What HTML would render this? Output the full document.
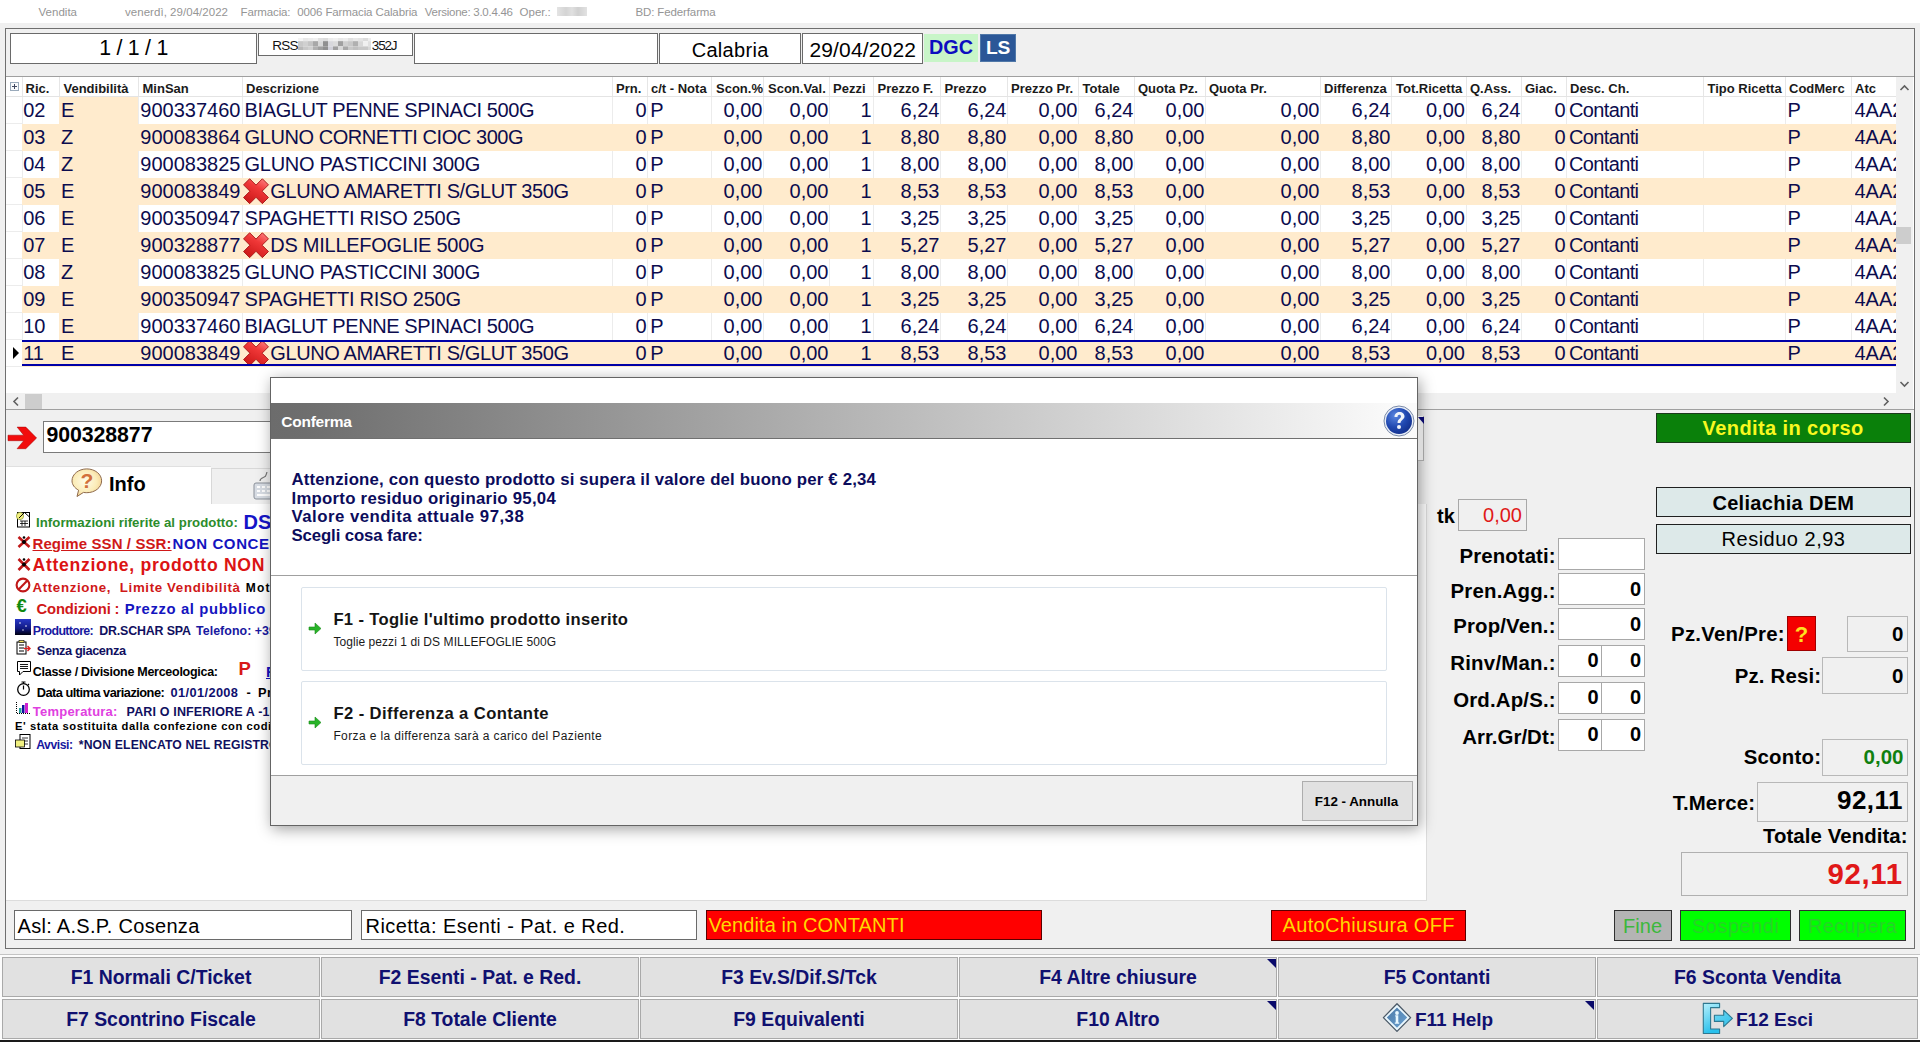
<!DOCTYPE html>
<html><head><meta charset="utf-8"><title>Vendita</title>
<style>
html,body{margin:0;padding:0;}
body{width:1920px;height:1042px;overflow:hidden;position:relative;background:#f0f0f0;font-family:'Liberation Sans', sans-serif;}
div{box-sizing:border-box;}
</style></head><body>
<div style="position:absolute;left:0px;top:0px;width:1920px;height:23px;background:#fff;"></div><div style="position:absolute;left:38.5px;top:6.72px;font-family:'Liberation Sans', sans-serif;font-size:11.5px;line-height:11.5px;font-weight:400;color:#959595;white-space:nowrap;letter-spacing:0.022px;">Vendita</div><div style="position:absolute;left:125px;top:6.72px;font-family:'Liberation Sans', sans-serif;font-size:11.5px;line-height:11.5px;font-weight:400;color:#959595;white-space:nowrap;letter-spacing:0.039px;">venerdì, 29/04/2022</div><div style="position:absolute;left:240.5px;top:6.72px;font-family:'Liberation Sans', sans-serif;font-size:11.5px;line-height:11.5px;font-weight:400;color:#959595;white-space:nowrap;letter-spacing:-0.140px;">Farmacia:</div><div style="position:absolute;left:297.2px;top:6.72px;font-family:'Liberation Sans', sans-serif;font-size:11.5px;line-height:11.5px;font-weight:400;color:#959595;white-space:nowrap;letter-spacing:-0.116px;">0006 Farmacia Calabria</div><div style="position:absolute;left:424.8px;top:6.72px;font-family:'Liberation Sans', sans-serif;font-size:11.5px;line-height:11.5px;font-weight:400;color:#959595;white-space:nowrap;letter-spacing:-0.265px;">Versione: 3.0.4.46</div><div style="position:absolute;left:519.6px;top:6.72px;font-family:'Liberation Sans', sans-serif;font-size:11.5px;line-height:11.5px;font-weight:400;color:#959595;white-space:nowrap;letter-spacing:-0.024px;">Oper.:</div><div style="position:absolute;left:557px;top:7px;width:30px;height:9px;background:linear-gradient(90deg,#e4e4e4,#d4d4d4 30%,#e0e0e0 50%,#d0d0d0 70%,#e2e2e2);"></div><div style="position:absolute;left:635.5px;top:6.72px;font-family:'Liberation Sans', sans-serif;font-size:11.5px;line-height:11.5px;font-weight:400;color:#959595;white-space:nowrap;letter-spacing:-0.123px;">BD: Federfarma</div><div style="position:absolute;left:5px;top:28px;width:1910px;height:921px;border:1px solid #6f6f6f;"></div><div style="position:absolute;left:10px;top:33px;width:247px;height:31px;border:1px solid #6a6a6a;background:#fff;"></div><div style="position:absolute;left:99.3px;top:38.02px;font-family:'Liberation Sans', sans-serif;font-size:21.3px;line-height:21.3px;font-weight:400;color:#000;white-space:nowrap;letter-spacing:-0.255px;">1 / 1 / 1</div><div style="position:absolute;left:258px;top:33px;width:155px;height:23px;border:1px solid #6a6a6a;background:#fff;"></div><div style="position:absolute;left:272.2px;top:38.72px;font-family:'Liberation Sans', sans-serif;font-size:13.5px;line-height:13.5px;font-weight:400;color:#111;white-space:nowrap;letter-spacing:-0.780px;">RSS</div><svg style="position:absolute;left:298px;top:38px" width="73" height="12" viewBox="0 0 73 11.5" preserveAspectRatio="none"><rect x="0" y="0" width="5" height="3" fill="#f4f4f4"/><rect x="0" y="3" width="5" height="5" fill="#c8c8c8"/><rect x="0" y="8" width="5" height="3.5" fill="#b8b8b8"/><rect x="5" y="0" width="5" height="3" fill="#e8e8e8"/><rect x="5" y="3" width="5" height="5" fill="#d0d0d0"/><rect x="5" y="8" width="5" height="3.5" fill="#c8c8c8"/><rect x="10" y="0" width="5" height="3" fill="#ececec"/><rect x="10" y="3" width="5" height="5" fill="#c4c4c4"/><rect x="10" y="8" width="5" height="3.5" fill="#d0d0d0"/><rect x="15" y="0" width="5" height="3" fill="#f0f0f0"/><rect x="15" y="3" width="5" height="5" fill="#a8a8a8"/><rect x="15" y="8" width="5" height="3.5" fill="#b0b0b0"/><rect x="20" y="0" width="5" height="3" fill="#e0e0e0"/><rect x="20" y="3" width="5" height="5" fill="#d8d8d8"/><rect x="20" y="8" width="5" height="3.5" fill="#a0a0a0"/><rect x="25" y="0" width="5" height="3" fill="#dcdcdc"/><rect x="25" y="3" width="5" height="5" fill="#909090"/><rect x="25" y="8" width="5" height="3.5" fill="#909090"/><rect x="30" y="0" width="5" height="3" fill="#ececec"/><rect x="30" y="3" width="5" height="5" fill="#d8d8dc"/><rect x="30" y="8" width="5" height="3.5" fill="#d0d0d8"/><rect x="35" y="0" width="5" height="3" fill="#f0f0f0"/><rect x="35" y="3" width="5" height="5" fill="#dcdcdc"/><rect x="35" y="8" width="5" height="3.5" fill="#a0a0a0"/><rect x="40" y="0" width="5" height="3" fill="#e8e8e8"/><rect x="40" y="3" width="5" height="5" fill="#a0a0a0"/><rect x="40" y="8" width="5" height="3.5" fill="#d8d8d8"/><rect x="45" y="0" width="5" height="3" fill="#ececec"/><rect x="45" y="3" width="5" height="5" fill="#d0d0d0"/><rect x="45" y="8" width="5" height="3.5" fill="#a8a8a8"/><rect x="50" y="0" width="5" height="3" fill="#e0e0e0"/><rect x="50" y="3" width="5" height="5" fill="#c8c8c8"/><rect x="50" y="8" width="5" height="3.5" fill="#c8c8c8"/><rect x="55" y="0" width="5" height="3" fill="#e8e8e8"/><rect x="55" y="3" width="5" height="5" fill="#b0b0b0"/><rect x="55" y="8" width="5" height="3.5" fill="#c0c0c0"/><rect x="60" y="0" width="5" height="3" fill="#e4e4e4"/><rect x="60" y="3" width="5" height="5" fill="#d8d8d8"/><rect x="60" y="8" width="5" height="3.5" fill="#c8c8c8"/><rect x="65" y="0" width="5" height="3" fill="#dcdcdc"/><rect x="65" y="3" width="5" height="5" fill="#f0f0f0"/><rect x="65" y="8" width="5" height="3.5" fill="#c8c8c8"/><rect x="70" y="0" width="5" height="3" fill="#eeeeee"/><rect x="70" y="3" width="5" height="5" fill="#e0e0e0"/><rect x="70" y="8" width="5" height="3.5" fill="#d8d8d8"/></svg><div style="position:absolute;left:371.8px;top:38.72px;font-family:'Liberation Sans', sans-serif;font-size:13.5px;line-height:13.5px;font-weight:400;color:#111;white-space:nowrap;letter-spacing:-1.158px;">352J</div><div style="position:absolute;left:414px;top:33px;width:244px;height:31px;border:1px solid #6a6a6a;background:#fff;"></div><div style="position:absolute;left:659px;top:33px;width:142px;height:31px;border:1px solid #6a6a6a;background:#fff;"></div><div style="position:absolute;left:691.7px;top:39.52px;font-family:'Liberation Sans', sans-serif;font-size:20px;line-height:20px;font-weight:400;color:#000;white-space:nowrap;letter-spacing:0.302px;">Calabria</div><div style="position:absolute;left:802px;top:33px;width:121px;height:31px;border:1px solid #6a6a6a;background:#fff;"></div><div style="position:absolute;left:809.4px;top:38.67px;font-family:'Liberation Sans', sans-serif;font-size:21px;line-height:21px;font-weight:400;color:#000;white-space:nowrap;letter-spacing:0.166px;">29/04/2022</div><div style="position:absolute;left:924px;top:34px;width:54px;height:28px;background:#c8f5c8;"></div><div style="position:absolute;left:929px;top:37.99px;font-family:'Liberation Sans', sans-serif;font-size:19.8px;line-height:19.8px;font-weight:700;color:#0d0dc0;white-space:nowrap;letter-spacing:0.000px;">DGC</div><div style="position:absolute;left:980px;top:34px;width:36px;height:28px;background:#2b5797;border:1px solid #5078a8;"></div><div style="position:absolute;left:986px;top:38.00px;font-family:'Liberation Sans', sans-serif;font-size:19.2px;line-height:19.2px;font-weight:700;color:#fff;white-space:nowrap;letter-spacing:-0.136px;">LS</div><div style="position:absolute;left:6px;top:76px;width:1908px;height:334px;background:#fff;"></div><div style="position:absolute;left:6px;top:76px;width:1908px;height:1px;background:#a0a0a0;"></div><div style="position:absolute;left:6px;top:96px;width:1890px;height:1px;background:#e4e4e4;"></div><div style="position:absolute;left:22px;top:77px;width:1px;height:19px;background:#e6e6e6;"></div><div style="position:absolute;left:22px;top:97px;width:1px;height:270px;background:#ececec;"></div><div style="position:absolute;left:59px;top:77px;width:1px;height:19px;background:#e6e6e6;"></div><div style="position:absolute;left:59px;top:97px;width:1px;height:270px;background:#ececec;"></div><div style="position:absolute;left:138px;top:77px;width:1px;height:19px;background:#e6e6e6;"></div><div style="position:absolute;left:138px;top:97px;width:1px;height:270px;background:#ececec;"></div><div style="position:absolute;left:242px;top:77px;width:1px;height:19px;background:#e6e6e6;"></div><div style="position:absolute;left:242px;top:97px;width:1px;height:270px;background:#ececec;"></div><div style="position:absolute;left:612px;top:77px;width:1px;height:19px;background:#e6e6e6;"></div><div style="position:absolute;left:612px;top:97px;width:1px;height:270px;background:#ececec;"></div><div style="position:absolute;left:647px;top:77px;width:1px;height:19px;background:#e6e6e6;"></div><div style="position:absolute;left:647px;top:97px;width:1px;height:270px;background:#ececec;"></div><div style="position:absolute;left:711px;top:77px;width:1px;height:19px;background:#e6e6e6;"></div><div style="position:absolute;left:711px;top:97px;width:1px;height:270px;background:#ececec;"></div><div style="position:absolute;left:763px;top:77px;width:1px;height:19px;background:#e6e6e6;"></div><div style="position:absolute;left:763px;top:97px;width:1px;height:270px;background:#ececec;"></div><div style="position:absolute;left:829px;top:77px;width:1px;height:19px;background:#e6e6e6;"></div><div style="position:absolute;left:829px;top:97px;width:1px;height:270px;background:#ececec;"></div><div style="position:absolute;left:873px;top:77px;width:1px;height:19px;background:#e6e6e6;"></div><div style="position:absolute;left:873px;top:97px;width:1px;height:270px;background:#ececec;"></div><div style="position:absolute;left:940px;top:77px;width:1px;height:19px;background:#e6e6e6;"></div><div style="position:absolute;left:940px;top:97px;width:1px;height:270px;background:#ececec;"></div><div style="position:absolute;left:1007px;top:77px;width:1px;height:19px;background:#e6e6e6;"></div><div style="position:absolute;left:1007px;top:97px;width:1px;height:270px;background:#ececec;"></div><div style="position:absolute;left:1078px;top:77px;width:1px;height:19px;background:#e6e6e6;"></div><div style="position:absolute;left:1078px;top:97px;width:1px;height:270px;background:#ececec;"></div><div style="position:absolute;left:1134px;top:77px;width:1px;height:19px;background:#e6e6e6;"></div><div style="position:absolute;left:1134px;top:97px;width:1px;height:270px;background:#ececec;"></div><div style="position:absolute;left:1205px;top:77px;width:1px;height:19px;background:#e6e6e6;"></div><div style="position:absolute;left:1205px;top:97px;width:1px;height:270px;background:#ececec;"></div><div style="position:absolute;left:1320px;top:77px;width:1px;height:19px;background:#e6e6e6;"></div><div style="position:absolute;left:1320px;top:97px;width:1px;height:270px;background:#ececec;"></div><div style="position:absolute;left:1391px;top:77px;width:1px;height:19px;background:#e6e6e6;"></div><div style="position:absolute;left:1391px;top:97px;width:1px;height:270px;background:#ececec;"></div><div style="position:absolute;left:1466px;top:77px;width:1px;height:19px;background:#e6e6e6;"></div><div style="position:absolute;left:1466px;top:97px;width:1px;height:270px;background:#ececec;"></div><div style="position:absolute;left:1521px;top:77px;width:1px;height:19px;background:#e6e6e6;"></div><div style="position:absolute;left:1521px;top:97px;width:1px;height:270px;background:#ececec;"></div><div style="position:absolute;left:1566px;top:77px;width:1px;height:19px;background:#e6e6e6;"></div><div style="position:absolute;left:1566px;top:97px;width:1px;height:270px;background:#ececec;"></div><div style="position:absolute;left:1703px;top:77px;width:1px;height:19px;background:#e6e6e6;"></div><div style="position:absolute;left:1703px;top:97px;width:1px;height:270px;background:#ececec;"></div><div style="position:absolute;left:1785px;top:77px;width:1px;height:19px;background:#e6e6e6;"></div><div style="position:absolute;left:1785px;top:97px;width:1px;height:270px;background:#ececec;"></div><div style="position:absolute;left:1851px;top:77px;width:1px;height:19px;background:#e6e6e6;"></div><div style="position:absolute;left:1851px;top:97px;width:1px;height:270px;background:#ececec;"></div><div style="position:absolute;left:59px;top:97px;width:79px;height:27px;background:#ffebcd;"></div><div style="position:absolute;left:6px;top:123px;width:16px;height:1px;background:#ececec;"></div><div style="position:absolute;left:22px;top:124px;width:1874px;height:27px;background:#ffebcd;"></div><div style="position:absolute;left:6px;top:150px;width:16px;height:1px;background:#ececec;"></div><div style="position:absolute;left:59px;top:151px;width:79px;height:27px;background:#ffebcd;"></div><div style="position:absolute;left:6px;top:177px;width:16px;height:1px;background:#ececec;"></div><div style="position:absolute;left:22px;top:178px;width:1874px;height:27px;background:#ffebcd;"></div><div style="position:absolute;left:6px;top:204px;width:16px;height:1px;background:#ececec;"></div><div style="position:absolute;left:59px;top:205px;width:79px;height:27px;background:#ffebcd;"></div><div style="position:absolute;left:6px;top:231px;width:16px;height:1px;background:#ececec;"></div><div style="position:absolute;left:22px;top:232px;width:1874px;height:27px;background:#ffebcd;"></div><div style="position:absolute;left:6px;top:258px;width:16px;height:1px;background:#ececec;"></div><div style="position:absolute;left:59px;top:259px;width:79px;height:27px;background:#ffebcd;"></div><div style="position:absolute;left:6px;top:285px;width:16px;height:1px;background:#ececec;"></div><div style="position:absolute;left:22px;top:286px;width:1874px;height:27px;background:#ffebcd;"></div><div style="position:absolute;left:6px;top:312px;width:16px;height:1px;background:#ececec;"></div><div style="position:absolute;left:59px;top:313px;width:79px;height:27px;background:#ffebcd;"></div><div style="position:absolute;left:6px;top:339px;width:16px;height:1px;background:#ececec;"></div><div style="position:absolute;left:22px;top:340px;width:1874px;height:27px;background:#ffebcd;"></div><div style="position:absolute;left:6px;top:366px;width:16px;height:1px;background:#ececec;"></div><div style="position:absolute;left:25.5px;top:82.45px;font-family:'Liberation Sans', sans-serif;font-size:13px;line-height:13px;font-weight:700;color:#1a1a1a;white-space:nowrap;">Ric.</div><div style="position:absolute;left:63.5px;top:82.45px;font-family:'Liberation Sans', sans-serif;font-size:13px;line-height:13px;font-weight:700;color:#1a1a1a;white-space:nowrap;">Vendibilità</div><div style="position:absolute;left:142.5px;top:82.45px;font-family:'Liberation Sans', sans-serif;font-size:13px;line-height:13px;font-weight:700;color:#1a1a1a;white-space:nowrap;">MinSan</div><div style="position:absolute;left:246px;top:82.45px;font-family:'Liberation Sans', sans-serif;font-size:13px;line-height:13px;font-weight:700;color:#1a1a1a;white-space:nowrap;">Descrizione</div><div style="position:absolute;left:616px;top:82.45px;font-family:'Liberation Sans', sans-serif;font-size:13px;line-height:13px;font-weight:700;color:#1a1a1a;white-space:nowrap;">Prn.</div><div style="position:absolute;left:651px;top:82.45px;font-family:'Liberation Sans', sans-serif;font-size:13px;line-height:13px;font-weight:700;color:#1a1a1a;white-space:nowrap;">c/t - Nota</div><div style="position:absolute;left:716px;top:82.45px;font-family:'Liberation Sans', sans-serif;font-size:13px;line-height:13px;font-weight:700;color:#1a1a1a;white-space:nowrap;">Scon.%</div><div style="position:absolute;left:768px;top:82.45px;font-family:'Liberation Sans', sans-serif;font-size:13px;line-height:13px;font-weight:700;color:#1a1a1a;white-space:nowrap;">Scon.Val.</div><div style="position:absolute;left:833px;top:82.45px;font-family:'Liberation Sans', sans-serif;font-size:13px;line-height:13px;font-weight:700;color:#1a1a1a;white-space:nowrap;">Pezzi</div><div style="position:absolute;left:877.5px;top:82.45px;font-family:'Liberation Sans', sans-serif;font-size:13px;line-height:13px;font-weight:700;color:#1a1a1a;white-space:nowrap;">Prezzo F.</div><div style="position:absolute;left:944.5px;top:82.45px;font-family:'Liberation Sans', sans-serif;font-size:13px;line-height:13px;font-weight:700;color:#1a1a1a;white-space:nowrap;">Prezzo</div><div style="position:absolute;left:1011px;top:82.45px;font-family:'Liberation Sans', sans-serif;font-size:13px;line-height:13px;font-weight:700;color:#1a1a1a;white-space:nowrap;">Prezzo Pr.</div><div style="position:absolute;left:1082.5px;top:82.45px;font-family:'Liberation Sans', sans-serif;font-size:13px;line-height:13px;font-weight:700;color:#1a1a1a;white-space:nowrap;">Totale</div><div style="position:absolute;left:1138px;top:82.45px;font-family:'Liberation Sans', sans-serif;font-size:13px;line-height:13px;font-weight:700;color:#1a1a1a;white-space:nowrap;">Quota Pz.</div><div style="position:absolute;left:1209px;top:82.45px;font-family:'Liberation Sans', sans-serif;font-size:13px;line-height:13px;font-weight:700;color:#1a1a1a;white-space:nowrap;">Quota Pr.</div><div style="position:absolute;left:1324px;top:82.45px;font-family:'Liberation Sans', sans-serif;font-size:13px;line-height:13px;font-weight:700;color:#1a1a1a;white-space:nowrap;">Differenza</div><div style="position:absolute;left:1396px;top:82.45px;font-family:'Liberation Sans', sans-serif;font-size:13px;line-height:13px;font-weight:700;color:#1a1a1a;white-space:nowrap;">Tot.Ricetta</div><div style="position:absolute;left:1470px;top:82.45px;font-family:'Liberation Sans', sans-serif;font-size:13px;line-height:13px;font-weight:700;color:#1a1a1a;white-space:nowrap;">Q.Ass.</div><div style="position:absolute;left:1525px;top:82.45px;font-family:'Liberation Sans', sans-serif;font-size:13px;line-height:13px;font-weight:700;color:#1a1a1a;white-space:nowrap;">Giac.</div><div style="position:absolute;left:1570px;top:82.45px;font-family:'Liberation Sans', sans-serif;font-size:13px;line-height:13px;font-weight:700;color:#1a1a1a;white-space:nowrap;">Desc. Ch.</div><div style="position:absolute;left:1707.5px;top:82.45px;font-family:'Liberation Sans', sans-serif;font-size:13px;line-height:13px;font-weight:700;color:#1a1a1a;white-space:nowrap;">Tipo Ricetta</div><div style="position:absolute;left:1789px;top:82.45px;font-family:'Liberation Sans', sans-serif;font-size:13px;line-height:13px;font-weight:700;color:#1a1a1a;white-space:nowrap;">CodMerc</div><div style="position:absolute;left:1855px;top:82.45px;font-family:'Liberation Sans', sans-serif;font-size:13px;line-height:13px;font-weight:700;color:#1a1a1a;white-space:nowrap;">Atc</div><div style="position:absolute;left:10px;top:82px;width:9px;height:9px;border:1px solid #9aaabb;background:#f8fafc;"></div><div style="position:absolute;left:12px;top:86px;width:5px;height:1px;background:#404860;"></div><div style="position:absolute;left:14px;top:84px;width:1px;height:5px;background:#404860;"></div><div style="position:absolute;left:23.2px;top:100.07px;font-family:'Liberation Sans', sans-serif;font-size:20px;line-height:20px;font-weight:400;color:#0c0c4e;white-space:nowrap;">02</div><div style="position:absolute;left:61px;top:100.07px;font-family:'Liberation Sans', sans-serif;font-size:20px;line-height:20px;font-weight:400;color:#0c0c4e;white-space:nowrap;">E</div><div style="position:absolute;left:140.3px;top:100.07px;font-family:'Liberation Sans', sans-serif;font-size:20px;line-height:20px;font-weight:400;color:#0c0c4e;white-space:nowrap;">900337460</div><div style="position:absolute;left:244.6px;top:100.07px;font-family:'Liberation Sans', sans-serif;font-size:20px;line-height:20px;font-weight:400;color:#0c0c4e;white-space:nowrap;letter-spacing:-0.390px;">BIAGLUT PENNE SPINACI 500G</div><div style="position:absolute;right:1273.500px;top:100.07px;font-family:'Liberation Sans', sans-serif;font-size:20px;line-height:20px;font-weight:400;color:#0c0c4e;white-space:nowrap;">0</div><div style="position:absolute;left:650.3px;top:100.07px;font-family:'Liberation Sans', sans-serif;font-size:20px;line-height:20px;font-weight:400;color:#0c0c4e;white-space:nowrap;">P</div><div style="position:absolute;right:1157.500px;top:100.07px;font-family:'Liberation Sans', sans-serif;font-size:20px;line-height:20px;font-weight:400;color:#0c0c4e;white-space:nowrap;">0,00</div><div style="position:absolute;right:1091.500px;top:100.07px;font-family:'Liberation Sans', sans-serif;font-size:20px;line-height:20px;font-weight:400;color:#0c0c4e;white-space:nowrap;">0,00</div><div style="position:absolute;right:1048.500px;top:100.07px;font-family:'Liberation Sans', sans-serif;font-size:20px;line-height:20px;font-weight:400;color:#0c0c4e;white-space:nowrap;">1</div><div style="position:absolute;right:980.500px;top:100.07px;font-family:'Liberation Sans', sans-serif;font-size:20px;line-height:20px;font-weight:400;color:#0c0c4e;white-space:nowrap;">6,24</div><div style="position:absolute;right:913.500px;top:100.07px;font-family:'Liberation Sans', sans-serif;font-size:20px;line-height:20px;font-weight:400;color:#0c0c4e;white-space:nowrap;">6,24</div><div style="position:absolute;right:842.500px;top:100.07px;font-family:'Liberation Sans', sans-serif;font-size:20px;line-height:20px;font-weight:400;color:#0c0c4e;white-space:nowrap;">0,00</div><div style="position:absolute;right:786.500px;top:100.07px;font-family:'Liberation Sans', sans-serif;font-size:20px;line-height:20px;font-weight:400;color:#0c0c4e;white-space:nowrap;">6,24</div><div style="position:absolute;right:715.500px;top:100.07px;font-family:'Liberation Sans', sans-serif;font-size:20px;line-height:20px;font-weight:400;color:#0c0c4e;white-space:nowrap;">0,00</div><div style="position:absolute;right:600.500px;top:100.07px;font-family:'Liberation Sans', sans-serif;font-size:20px;line-height:20px;font-weight:400;color:#0c0c4e;white-space:nowrap;">0,00</div><div style="position:absolute;right:529.500px;top:100.07px;font-family:'Liberation Sans', sans-serif;font-size:20px;line-height:20px;font-weight:400;color:#0c0c4e;white-space:nowrap;">6,24</div><div style="position:absolute;right:455.000px;top:100.07px;font-family:'Liberation Sans', sans-serif;font-size:20px;line-height:20px;font-weight:400;color:#0c0c4e;white-space:nowrap;">0,00</div><div style="position:absolute;right:399.500px;top:100.07px;font-family:'Liberation Sans', sans-serif;font-size:20px;line-height:20px;font-weight:400;color:#0c0c4e;white-space:nowrap;">6,24</div><div style="position:absolute;right:354.500px;top:100.07px;font-family:'Liberation Sans', sans-serif;font-size:20px;line-height:20px;font-weight:400;color:#0c0c4e;white-space:nowrap;">0</div><div style="position:absolute;left:1569px;top:100.07px;font-family:'Liberation Sans', sans-serif;font-size:20px;line-height:20px;font-weight:400;color:#0c0c4e;white-space:nowrap;letter-spacing:-0.642px;">Contanti</div><div style="position:absolute;left:1787.5px;top:100.07px;font-family:'Liberation Sans', sans-serif;font-size:20px;line-height:20px;font-weight:400;color:#0c0c4e;white-space:nowrap;">P</div><div style="position:absolute;left:1854.5px;top:100.07px;font-family:'Liberation Sans', sans-serif;font-size:20px;line-height:20px;font-weight:400;color:#0c0c4e;white-space:nowrap;width:41px;overflow:hidden;">4AA2</div><div style="position:absolute;left:23.2px;top:127.07px;font-family:'Liberation Sans', sans-serif;font-size:20px;line-height:20px;font-weight:400;color:#0c0c4e;white-space:nowrap;">03</div><div style="position:absolute;left:61px;top:127.07px;font-family:'Liberation Sans', sans-serif;font-size:20px;line-height:20px;font-weight:400;color:#0c0c4e;white-space:nowrap;">Z</div><div style="position:absolute;left:140.3px;top:127.07px;font-family:'Liberation Sans', sans-serif;font-size:20px;line-height:20px;font-weight:400;color:#0c0c4e;white-space:nowrap;">900083864</div><div style="position:absolute;left:244.6px;top:127.07px;font-family:'Liberation Sans', sans-serif;font-size:20px;line-height:20px;font-weight:400;color:#0c0c4e;white-space:nowrap;letter-spacing:-0.432px;">GLUNO CORNETTI CIOC 300G</div><div style="position:absolute;right:1273.500px;top:127.07px;font-family:'Liberation Sans', sans-serif;font-size:20px;line-height:20px;font-weight:400;color:#0c0c4e;white-space:nowrap;">0</div><div style="position:absolute;left:650.3px;top:127.07px;font-family:'Liberation Sans', sans-serif;font-size:20px;line-height:20px;font-weight:400;color:#0c0c4e;white-space:nowrap;">P</div><div style="position:absolute;right:1157.500px;top:127.07px;font-family:'Liberation Sans', sans-serif;font-size:20px;line-height:20px;font-weight:400;color:#0c0c4e;white-space:nowrap;">0,00</div><div style="position:absolute;right:1091.500px;top:127.07px;font-family:'Liberation Sans', sans-serif;font-size:20px;line-height:20px;font-weight:400;color:#0c0c4e;white-space:nowrap;">0,00</div><div style="position:absolute;right:1048.500px;top:127.07px;font-family:'Liberation Sans', sans-serif;font-size:20px;line-height:20px;font-weight:400;color:#0c0c4e;white-space:nowrap;">1</div><div style="position:absolute;right:980.500px;top:127.07px;font-family:'Liberation Sans', sans-serif;font-size:20px;line-height:20px;font-weight:400;color:#0c0c4e;white-space:nowrap;">8,80</div><div style="position:absolute;right:913.500px;top:127.07px;font-family:'Liberation Sans', sans-serif;font-size:20px;line-height:20px;font-weight:400;color:#0c0c4e;white-space:nowrap;">8,80</div><div style="position:absolute;right:842.500px;top:127.07px;font-family:'Liberation Sans', sans-serif;font-size:20px;line-height:20px;font-weight:400;color:#0c0c4e;white-space:nowrap;">0,00</div><div style="position:absolute;right:786.500px;top:127.07px;font-family:'Liberation Sans', sans-serif;font-size:20px;line-height:20px;font-weight:400;color:#0c0c4e;white-space:nowrap;">8,80</div><div style="position:absolute;right:715.500px;top:127.07px;font-family:'Liberation Sans', sans-serif;font-size:20px;line-height:20px;font-weight:400;color:#0c0c4e;white-space:nowrap;">0,00</div><div style="position:absolute;right:600.500px;top:127.07px;font-family:'Liberation Sans', sans-serif;font-size:20px;line-height:20px;font-weight:400;color:#0c0c4e;white-space:nowrap;">0,00</div><div style="position:absolute;right:529.500px;top:127.07px;font-family:'Liberation Sans', sans-serif;font-size:20px;line-height:20px;font-weight:400;color:#0c0c4e;white-space:nowrap;">8,80</div><div style="position:absolute;right:455.000px;top:127.07px;font-family:'Liberation Sans', sans-serif;font-size:20px;line-height:20px;font-weight:400;color:#0c0c4e;white-space:nowrap;">0,00</div><div style="position:absolute;right:399.500px;top:127.07px;font-family:'Liberation Sans', sans-serif;font-size:20px;line-height:20px;font-weight:400;color:#0c0c4e;white-space:nowrap;">8,80</div><div style="position:absolute;right:354.500px;top:127.07px;font-family:'Liberation Sans', sans-serif;font-size:20px;line-height:20px;font-weight:400;color:#0c0c4e;white-space:nowrap;">0</div><div style="position:absolute;left:1569px;top:127.07px;font-family:'Liberation Sans', sans-serif;font-size:20px;line-height:20px;font-weight:400;color:#0c0c4e;white-space:nowrap;letter-spacing:-0.642px;">Contanti</div><div style="position:absolute;left:1787.5px;top:127.07px;font-family:'Liberation Sans', sans-serif;font-size:20px;line-height:20px;font-weight:400;color:#0c0c4e;white-space:nowrap;">P</div><div style="position:absolute;left:1854.5px;top:127.07px;font-family:'Liberation Sans', sans-serif;font-size:20px;line-height:20px;font-weight:400;color:#0c0c4e;white-space:nowrap;width:41px;overflow:hidden;">4AA2</div><div style="position:absolute;left:23.2px;top:154.07px;font-family:'Liberation Sans', sans-serif;font-size:20px;line-height:20px;font-weight:400;color:#0c0c4e;white-space:nowrap;">04</div><div style="position:absolute;left:61px;top:154.07px;font-family:'Liberation Sans', sans-serif;font-size:20px;line-height:20px;font-weight:400;color:#0c0c4e;white-space:nowrap;">Z</div><div style="position:absolute;left:140.3px;top:154.07px;font-family:'Liberation Sans', sans-serif;font-size:20px;line-height:20px;font-weight:400;color:#0c0c4e;white-space:nowrap;">900083825</div><div style="position:absolute;left:244.6px;top:154.07px;font-family:'Liberation Sans', sans-serif;font-size:20px;line-height:20px;font-weight:400;color:#0c0c4e;white-space:nowrap;letter-spacing:-0.316px;">GLUNO PASTICCINI 300G</div><div style="position:absolute;right:1273.500px;top:154.07px;font-family:'Liberation Sans', sans-serif;font-size:20px;line-height:20px;font-weight:400;color:#0c0c4e;white-space:nowrap;">0</div><div style="position:absolute;left:650.3px;top:154.07px;font-family:'Liberation Sans', sans-serif;font-size:20px;line-height:20px;font-weight:400;color:#0c0c4e;white-space:nowrap;">P</div><div style="position:absolute;right:1157.500px;top:154.07px;font-family:'Liberation Sans', sans-serif;font-size:20px;line-height:20px;font-weight:400;color:#0c0c4e;white-space:nowrap;">0,00</div><div style="position:absolute;right:1091.500px;top:154.07px;font-family:'Liberation Sans', sans-serif;font-size:20px;line-height:20px;font-weight:400;color:#0c0c4e;white-space:nowrap;">0,00</div><div style="position:absolute;right:1048.500px;top:154.07px;font-family:'Liberation Sans', sans-serif;font-size:20px;line-height:20px;font-weight:400;color:#0c0c4e;white-space:nowrap;">1</div><div style="position:absolute;right:980.500px;top:154.07px;font-family:'Liberation Sans', sans-serif;font-size:20px;line-height:20px;font-weight:400;color:#0c0c4e;white-space:nowrap;">8,00</div><div style="position:absolute;right:913.500px;top:154.07px;font-family:'Liberation Sans', sans-serif;font-size:20px;line-height:20px;font-weight:400;color:#0c0c4e;white-space:nowrap;">8,00</div><div style="position:absolute;right:842.500px;top:154.07px;font-family:'Liberation Sans', sans-serif;font-size:20px;line-height:20px;font-weight:400;color:#0c0c4e;white-space:nowrap;">0,00</div><div style="position:absolute;right:786.500px;top:154.07px;font-family:'Liberation Sans', sans-serif;font-size:20px;line-height:20px;font-weight:400;color:#0c0c4e;white-space:nowrap;">8,00</div><div style="position:absolute;right:715.500px;top:154.07px;font-family:'Liberation Sans', sans-serif;font-size:20px;line-height:20px;font-weight:400;color:#0c0c4e;white-space:nowrap;">0,00</div><div style="position:absolute;right:600.500px;top:154.07px;font-family:'Liberation Sans', sans-serif;font-size:20px;line-height:20px;font-weight:400;color:#0c0c4e;white-space:nowrap;">0,00</div><div style="position:absolute;right:529.500px;top:154.07px;font-family:'Liberation Sans', sans-serif;font-size:20px;line-height:20px;font-weight:400;color:#0c0c4e;white-space:nowrap;">8,00</div><div style="position:absolute;right:455.000px;top:154.07px;font-family:'Liberation Sans', sans-serif;font-size:20px;line-height:20px;font-weight:400;color:#0c0c4e;white-space:nowrap;">0,00</div><div style="position:absolute;right:399.500px;top:154.07px;font-family:'Liberation Sans', sans-serif;font-size:20px;line-height:20px;font-weight:400;color:#0c0c4e;white-space:nowrap;">8,00</div><div style="position:absolute;right:354.500px;top:154.07px;font-family:'Liberation Sans', sans-serif;font-size:20px;line-height:20px;font-weight:400;color:#0c0c4e;white-space:nowrap;">0</div><div style="position:absolute;left:1569px;top:154.07px;font-family:'Liberation Sans', sans-serif;font-size:20px;line-height:20px;font-weight:400;color:#0c0c4e;white-space:nowrap;letter-spacing:-0.642px;">Contanti</div><div style="position:absolute;left:1787.5px;top:154.07px;font-family:'Liberation Sans', sans-serif;font-size:20px;line-height:20px;font-weight:400;color:#0c0c4e;white-space:nowrap;">P</div><div style="position:absolute;left:1854.5px;top:154.07px;font-family:'Liberation Sans', sans-serif;font-size:20px;line-height:20px;font-weight:400;color:#0c0c4e;white-space:nowrap;width:41px;overflow:hidden;">4AA2</div><div style="position:absolute;left:23.2px;top:181.07px;font-family:'Liberation Sans', sans-serif;font-size:20px;line-height:20px;font-weight:400;color:#0c0c4e;white-space:nowrap;">05</div><div style="position:absolute;left:61px;top:181.07px;font-family:'Liberation Sans', sans-serif;font-size:20px;line-height:20px;font-weight:400;color:#0c0c4e;white-space:nowrap;">E</div><div style="position:absolute;left:140.3px;top:181.07px;font-family:'Liberation Sans', sans-serif;font-size:20px;line-height:20px;font-weight:400;color:#0c0c4e;white-space:nowrap;">900083849</div><svg style="position:absolute;left:243px;top:178px" width="27" height="27" viewBox="0 0 27 27"><defs><linearGradient id="xg" x1="0" y1="0" x2="0.3" y2="1"><stop offset="0" stop-color="#ff8a8a"/><stop offset="0.45" stop-color="#f03838"/><stop offset="1" stop-color="#d01c1c"/></linearGradient></defs><g transform="translate(13,13.2) rotate(45)"><path d="M13.30,4.30 L4.30,4.30 L4.30,13.30 L-4.30,13.30 L-4.30,4.30 L-13.30,4.30 L-13.30,-4.30 L-4.30,-4.30 L-4.30,-13.30 L4.30,-13.30 L4.30,-4.30 L13.30,-4.30 Z" fill="url(#xg)" stroke="#a81818" stroke-width="0.9" stroke-linejoin="round"/></g></svg><div style="position:absolute;left:270.3px;top:181.07px;font-family:'Liberation Sans', sans-serif;font-size:20px;line-height:20px;font-weight:400;color:#0c0c4e;white-space:nowrap;letter-spacing:-0.392px;">GLUNO AMARETTI S/GLUT 350G</div><div style="position:absolute;right:1273.500px;top:181.07px;font-family:'Liberation Sans', sans-serif;font-size:20px;line-height:20px;font-weight:400;color:#0c0c4e;white-space:nowrap;">0</div><div style="position:absolute;left:650.3px;top:181.07px;font-family:'Liberation Sans', sans-serif;font-size:20px;line-height:20px;font-weight:400;color:#0c0c4e;white-space:nowrap;">P</div><div style="position:absolute;right:1157.500px;top:181.07px;font-family:'Liberation Sans', sans-serif;font-size:20px;line-height:20px;font-weight:400;color:#0c0c4e;white-space:nowrap;">0,00</div><div style="position:absolute;right:1091.500px;top:181.07px;font-family:'Liberation Sans', sans-serif;font-size:20px;line-height:20px;font-weight:400;color:#0c0c4e;white-space:nowrap;">0,00</div><div style="position:absolute;right:1048.500px;top:181.07px;font-family:'Liberation Sans', sans-serif;font-size:20px;line-height:20px;font-weight:400;color:#0c0c4e;white-space:nowrap;">1</div><div style="position:absolute;right:980.500px;top:181.07px;font-family:'Liberation Sans', sans-serif;font-size:20px;line-height:20px;font-weight:400;color:#0c0c4e;white-space:nowrap;">8,53</div><div style="position:absolute;right:913.500px;top:181.07px;font-family:'Liberation Sans', sans-serif;font-size:20px;line-height:20px;font-weight:400;color:#0c0c4e;white-space:nowrap;">8,53</div><div style="position:absolute;right:842.500px;top:181.07px;font-family:'Liberation Sans', sans-serif;font-size:20px;line-height:20px;font-weight:400;color:#0c0c4e;white-space:nowrap;">0,00</div><div style="position:absolute;right:786.500px;top:181.07px;font-family:'Liberation Sans', sans-serif;font-size:20px;line-height:20px;font-weight:400;color:#0c0c4e;white-space:nowrap;">8,53</div><div style="position:absolute;right:715.500px;top:181.07px;font-family:'Liberation Sans', sans-serif;font-size:20px;line-height:20px;font-weight:400;color:#0c0c4e;white-space:nowrap;">0,00</div><div style="position:absolute;right:600.500px;top:181.07px;font-family:'Liberation Sans', sans-serif;font-size:20px;line-height:20px;font-weight:400;color:#0c0c4e;white-space:nowrap;">0,00</div><div style="position:absolute;right:529.500px;top:181.07px;font-family:'Liberation Sans', sans-serif;font-size:20px;line-height:20px;font-weight:400;color:#0c0c4e;white-space:nowrap;">8,53</div><div style="position:absolute;right:455.000px;top:181.07px;font-family:'Liberation Sans', sans-serif;font-size:20px;line-height:20px;font-weight:400;color:#0c0c4e;white-space:nowrap;">0,00</div><div style="position:absolute;right:399.500px;top:181.07px;font-family:'Liberation Sans', sans-serif;font-size:20px;line-height:20px;font-weight:400;color:#0c0c4e;white-space:nowrap;">8,53</div><div style="position:absolute;right:354.500px;top:181.07px;font-family:'Liberation Sans', sans-serif;font-size:20px;line-height:20px;font-weight:400;color:#0c0c4e;white-space:nowrap;">0</div><div style="position:absolute;left:1569px;top:181.07px;font-family:'Liberation Sans', sans-serif;font-size:20px;line-height:20px;font-weight:400;color:#0c0c4e;white-space:nowrap;letter-spacing:-0.642px;">Contanti</div><div style="position:absolute;left:1787.5px;top:181.07px;font-family:'Liberation Sans', sans-serif;font-size:20px;line-height:20px;font-weight:400;color:#0c0c4e;white-space:nowrap;">P</div><div style="position:absolute;left:1854.5px;top:181.07px;font-family:'Liberation Sans', sans-serif;font-size:20px;line-height:20px;font-weight:400;color:#0c0c4e;white-space:nowrap;width:41px;overflow:hidden;">4AA2</div><div style="position:absolute;left:23.2px;top:208.07px;font-family:'Liberation Sans', sans-serif;font-size:20px;line-height:20px;font-weight:400;color:#0c0c4e;white-space:nowrap;">06</div><div style="position:absolute;left:61px;top:208.07px;font-family:'Liberation Sans', sans-serif;font-size:20px;line-height:20px;font-weight:400;color:#0c0c4e;white-space:nowrap;">E</div><div style="position:absolute;left:140.3px;top:208.07px;font-family:'Liberation Sans', sans-serif;font-size:20px;line-height:20px;font-weight:400;color:#0c0c4e;white-space:nowrap;">900350947</div><div style="position:absolute;left:244.6px;top:208.07px;font-family:'Liberation Sans', sans-serif;font-size:20px;line-height:20px;font-weight:400;color:#0c0c4e;white-space:nowrap;letter-spacing:-0.245px;">SPAGHETTI RISO 250G</div><div style="position:absolute;right:1273.500px;top:208.07px;font-family:'Liberation Sans', sans-serif;font-size:20px;line-height:20px;font-weight:400;color:#0c0c4e;white-space:nowrap;">0</div><div style="position:absolute;left:650.3px;top:208.07px;font-family:'Liberation Sans', sans-serif;font-size:20px;line-height:20px;font-weight:400;color:#0c0c4e;white-space:nowrap;">P</div><div style="position:absolute;right:1157.500px;top:208.07px;font-family:'Liberation Sans', sans-serif;font-size:20px;line-height:20px;font-weight:400;color:#0c0c4e;white-space:nowrap;">0,00</div><div style="position:absolute;right:1091.500px;top:208.07px;font-family:'Liberation Sans', sans-serif;font-size:20px;line-height:20px;font-weight:400;color:#0c0c4e;white-space:nowrap;">0,00</div><div style="position:absolute;right:1048.500px;top:208.07px;font-family:'Liberation Sans', sans-serif;font-size:20px;line-height:20px;font-weight:400;color:#0c0c4e;white-space:nowrap;">1</div><div style="position:absolute;right:980.500px;top:208.07px;font-family:'Liberation Sans', sans-serif;font-size:20px;line-height:20px;font-weight:400;color:#0c0c4e;white-space:nowrap;">3,25</div><div style="position:absolute;right:913.500px;top:208.07px;font-family:'Liberation Sans', sans-serif;font-size:20px;line-height:20px;font-weight:400;color:#0c0c4e;white-space:nowrap;">3,25</div><div style="position:absolute;right:842.500px;top:208.07px;font-family:'Liberation Sans', sans-serif;font-size:20px;line-height:20px;font-weight:400;color:#0c0c4e;white-space:nowrap;">0,00</div><div style="position:absolute;right:786.500px;top:208.07px;font-family:'Liberation Sans', sans-serif;font-size:20px;line-height:20px;font-weight:400;color:#0c0c4e;white-space:nowrap;">3,25</div><div style="position:absolute;right:715.500px;top:208.07px;font-family:'Liberation Sans', sans-serif;font-size:20px;line-height:20px;font-weight:400;color:#0c0c4e;white-space:nowrap;">0,00</div><div style="position:absolute;right:600.500px;top:208.07px;font-family:'Liberation Sans', sans-serif;font-size:20px;line-height:20px;font-weight:400;color:#0c0c4e;white-space:nowrap;">0,00</div><div style="position:absolute;right:529.500px;top:208.07px;font-family:'Liberation Sans', sans-serif;font-size:20px;line-height:20px;font-weight:400;color:#0c0c4e;white-space:nowrap;">3,25</div><div style="position:absolute;right:455.000px;top:208.07px;font-family:'Liberation Sans', sans-serif;font-size:20px;line-height:20px;font-weight:400;color:#0c0c4e;white-space:nowrap;">0,00</div><div style="position:absolute;right:399.500px;top:208.07px;font-family:'Liberation Sans', sans-serif;font-size:20px;line-height:20px;font-weight:400;color:#0c0c4e;white-space:nowrap;">3,25</div><div style="position:absolute;right:354.500px;top:208.07px;font-family:'Liberation Sans', sans-serif;font-size:20px;line-height:20px;font-weight:400;color:#0c0c4e;white-space:nowrap;">0</div><div style="position:absolute;left:1569px;top:208.07px;font-family:'Liberation Sans', sans-serif;font-size:20px;line-height:20px;font-weight:400;color:#0c0c4e;white-space:nowrap;letter-spacing:-0.642px;">Contanti</div><div style="position:absolute;left:1787.5px;top:208.07px;font-family:'Liberation Sans', sans-serif;font-size:20px;line-height:20px;font-weight:400;color:#0c0c4e;white-space:nowrap;">P</div><div style="position:absolute;left:1854.5px;top:208.07px;font-family:'Liberation Sans', sans-serif;font-size:20px;line-height:20px;font-weight:400;color:#0c0c4e;white-space:nowrap;width:41px;overflow:hidden;">4AA2</div><div style="position:absolute;left:23.2px;top:235.07px;font-family:'Liberation Sans', sans-serif;font-size:20px;line-height:20px;font-weight:400;color:#0c0c4e;white-space:nowrap;">07</div><div style="position:absolute;left:61px;top:235.07px;font-family:'Liberation Sans', sans-serif;font-size:20px;line-height:20px;font-weight:400;color:#0c0c4e;white-space:nowrap;">E</div><div style="position:absolute;left:140.3px;top:235.07px;font-family:'Liberation Sans', sans-serif;font-size:20px;line-height:20px;font-weight:400;color:#0c0c4e;white-space:nowrap;">900328877</div><svg style="position:absolute;left:243px;top:232px" width="27" height="27" viewBox="0 0 27 27"><defs><linearGradient id="xg" x1="0" y1="0" x2="0.3" y2="1"><stop offset="0" stop-color="#ff8a8a"/><stop offset="0.45" stop-color="#f03838"/><stop offset="1" stop-color="#d01c1c"/></linearGradient></defs><g transform="translate(13,13.2) rotate(45)"><path d="M13.30,4.30 L4.30,4.30 L4.30,13.30 L-4.30,13.30 L-4.30,4.30 L-13.30,4.30 L-13.30,-4.30 L-4.30,-4.30 L-4.30,-13.30 L4.30,-13.30 L4.30,-4.30 L13.30,-4.30 Z" fill="url(#xg)" stroke="#a81818" stroke-width="0.9" stroke-linejoin="round"/></g></svg><div style="position:absolute;left:270.3px;top:235.07px;font-family:'Liberation Sans', sans-serif;font-size:20px;line-height:20px;font-weight:400;color:#0c0c4e;white-space:nowrap;letter-spacing:-0.260px;">DS MILLEFOGLIE 500G</div><div style="position:absolute;right:1273.500px;top:235.07px;font-family:'Liberation Sans', sans-serif;font-size:20px;line-height:20px;font-weight:400;color:#0c0c4e;white-space:nowrap;">0</div><div style="position:absolute;left:650.3px;top:235.07px;font-family:'Liberation Sans', sans-serif;font-size:20px;line-height:20px;font-weight:400;color:#0c0c4e;white-space:nowrap;">P</div><div style="position:absolute;right:1157.500px;top:235.07px;font-family:'Liberation Sans', sans-serif;font-size:20px;line-height:20px;font-weight:400;color:#0c0c4e;white-space:nowrap;">0,00</div><div style="position:absolute;right:1091.500px;top:235.07px;font-family:'Liberation Sans', sans-serif;font-size:20px;line-height:20px;font-weight:400;color:#0c0c4e;white-space:nowrap;">0,00</div><div style="position:absolute;right:1048.500px;top:235.07px;font-family:'Liberation Sans', sans-serif;font-size:20px;line-height:20px;font-weight:400;color:#0c0c4e;white-space:nowrap;">1</div><div style="position:absolute;right:980.500px;top:235.07px;font-family:'Liberation Sans', sans-serif;font-size:20px;line-height:20px;font-weight:400;color:#0c0c4e;white-space:nowrap;">5,27</div><div style="position:absolute;right:913.500px;top:235.07px;font-family:'Liberation Sans', sans-serif;font-size:20px;line-height:20px;font-weight:400;color:#0c0c4e;white-space:nowrap;">5,27</div><div style="position:absolute;right:842.500px;top:235.07px;font-family:'Liberation Sans', sans-serif;font-size:20px;line-height:20px;font-weight:400;color:#0c0c4e;white-space:nowrap;">0,00</div><div style="position:absolute;right:786.500px;top:235.07px;font-family:'Liberation Sans', sans-serif;font-size:20px;line-height:20px;font-weight:400;color:#0c0c4e;white-space:nowrap;">5,27</div><div style="position:absolute;right:715.500px;top:235.07px;font-family:'Liberation Sans', sans-serif;font-size:20px;line-height:20px;font-weight:400;color:#0c0c4e;white-space:nowrap;">0,00</div><div style="position:absolute;right:600.500px;top:235.07px;font-family:'Liberation Sans', sans-serif;font-size:20px;line-height:20px;font-weight:400;color:#0c0c4e;white-space:nowrap;">0,00</div><div style="position:absolute;right:529.500px;top:235.07px;font-family:'Liberation Sans', sans-serif;font-size:20px;line-height:20px;font-weight:400;color:#0c0c4e;white-space:nowrap;">5,27</div><div style="position:absolute;right:455.000px;top:235.07px;font-family:'Liberation Sans', sans-serif;font-size:20px;line-height:20px;font-weight:400;color:#0c0c4e;white-space:nowrap;">0,00</div><div style="position:absolute;right:399.500px;top:235.07px;font-family:'Liberation Sans', sans-serif;font-size:20px;line-height:20px;font-weight:400;color:#0c0c4e;white-space:nowrap;">5,27</div><div style="position:absolute;right:354.500px;top:235.07px;font-family:'Liberation Sans', sans-serif;font-size:20px;line-height:20px;font-weight:400;color:#0c0c4e;white-space:nowrap;">0</div><div style="position:absolute;left:1569px;top:235.07px;font-family:'Liberation Sans', sans-serif;font-size:20px;line-height:20px;font-weight:400;color:#0c0c4e;white-space:nowrap;letter-spacing:-0.642px;">Contanti</div><div style="position:absolute;left:1787.5px;top:235.07px;font-family:'Liberation Sans', sans-serif;font-size:20px;line-height:20px;font-weight:400;color:#0c0c4e;white-space:nowrap;">P</div><div style="position:absolute;left:1854.5px;top:235.07px;font-family:'Liberation Sans', sans-serif;font-size:20px;line-height:20px;font-weight:400;color:#0c0c4e;white-space:nowrap;width:41px;overflow:hidden;">4AA2</div><div style="position:absolute;left:23.2px;top:262.07px;font-family:'Liberation Sans', sans-serif;font-size:20px;line-height:20px;font-weight:400;color:#0c0c4e;white-space:nowrap;">08</div><div style="position:absolute;left:61px;top:262.07px;font-family:'Liberation Sans', sans-serif;font-size:20px;line-height:20px;font-weight:400;color:#0c0c4e;white-space:nowrap;">Z</div><div style="position:absolute;left:140.3px;top:262.07px;font-family:'Liberation Sans', sans-serif;font-size:20px;line-height:20px;font-weight:400;color:#0c0c4e;white-space:nowrap;">900083825</div><div style="position:absolute;left:244.6px;top:262.07px;font-family:'Liberation Sans', sans-serif;font-size:20px;line-height:20px;font-weight:400;color:#0c0c4e;white-space:nowrap;letter-spacing:-0.316px;">GLUNO PASTICCINI 300G</div><div style="position:absolute;right:1273.500px;top:262.07px;font-family:'Liberation Sans', sans-serif;font-size:20px;line-height:20px;font-weight:400;color:#0c0c4e;white-space:nowrap;">0</div><div style="position:absolute;left:650.3px;top:262.07px;font-family:'Liberation Sans', sans-serif;font-size:20px;line-height:20px;font-weight:400;color:#0c0c4e;white-space:nowrap;">P</div><div style="position:absolute;right:1157.500px;top:262.07px;font-family:'Liberation Sans', sans-serif;font-size:20px;line-height:20px;font-weight:400;color:#0c0c4e;white-space:nowrap;">0,00</div><div style="position:absolute;right:1091.500px;top:262.07px;font-family:'Liberation Sans', sans-serif;font-size:20px;line-height:20px;font-weight:400;color:#0c0c4e;white-space:nowrap;">0,00</div><div style="position:absolute;right:1048.500px;top:262.07px;font-family:'Liberation Sans', sans-serif;font-size:20px;line-height:20px;font-weight:400;color:#0c0c4e;white-space:nowrap;">1</div><div style="position:absolute;right:980.500px;top:262.07px;font-family:'Liberation Sans', sans-serif;font-size:20px;line-height:20px;font-weight:400;color:#0c0c4e;white-space:nowrap;">8,00</div><div style="position:absolute;right:913.500px;top:262.07px;font-family:'Liberation Sans', sans-serif;font-size:20px;line-height:20px;font-weight:400;color:#0c0c4e;white-space:nowrap;">8,00</div><div style="position:absolute;right:842.500px;top:262.07px;font-family:'Liberation Sans', sans-serif;font-size:20px;line-height:20px;font-weight:400;color:#0c0c4e;white-space:nowrap;">0,00</div><div style="position:absolute;right:786.500px;top:262.07px;font-family:'Liberation Sans', sans-serif;font-size:20px;line-height:20px;font-weight:400;color:#0c0c4e;white-space:nowrap;">8,00</div><div style="position:absolute;right:715.500px;top:262.07px;font-family:'Liberation Sans', sans-serif;font-size:20px;line-height:20px;font-weight:400;color:#0c0c4e;white-space:nowrap;">0,00</div><div style="position:absolute;right:600.500px;top:262.07px;font-family:'Liberation Sans', sans-serif;font-size:20px;line-height:20px;font-weight:400;color:#0c0c4e;white-space:nowrap;">0,00</div><div style="position:absolute;right:529.500px;top:262.07px;font-family:'Liberation Sans', sans-serif;font-size:20px;line-height:20px;font-weight:400;color:#0c0c4e;white-space:nowrap;">8,00</div><div style="position:absolute;right:455.000px;top:262.07px;font-family:'Liberation Sans', sans-serif;font-size:20px;line-height:20px;font-weight:400;color:#0c0c4e;white-space:nowrap;">0,00</div><div style="position:absolute;right:399.500px;top:262.07px;font-family:'Liberation Sans', sans-serif;font-size:20px;line-height:20px;font-weight:400;color:#0c0c4e;white-space:nowrap;">8,00</div><div style="position:absolute;right:354.500px;top:262.07px;font-family:'Liberation Sans', sans-serif;font-size:20px;line-height:20px;font-weight:400;color:#0c0c4e;white-space:nowrap;">0</div><div style="position:absolute;left:1569px;top:262.07px;font-family:'Liberation Sans', sans-serif;font-size:20px;line-height:20px;font-weight:400;color:#0c0c4e;white-space:nowrap;letter-spacing:-0.642px;">Contanti</div><div style="position:absolute;left:1787.5px;top:262.07px;font-family:'Liberation Sans', sans-serif;font-size:20px;line-height:20px;font-weight:400;color:#0c0c4e;white-space:nowrap;">P</div><div style="position:absolute;left:1854.5px;top:262.07px;font-family:'Liberation Sans', sans-serif;font-size:20px;line-height:20px;font-weight:400;color:#0c0c4e;white-space:nowrap;width:41px;overflow:hidden;">4AA2</div><div style="position:absolute;left:23.2px;top:289.07px;font-family:'Liberation Sans', sans-serif;font-size:20px;line-height:20px;font-weight:400;color:#0c0c4e;white-space:nowrap;">09</div><div style="position:absolute;left:61px;top:289.07px;font-family:'Liberation Sans', sans-serif;font-size:20px;line-height:20px;font-weight:400;color:#0c0c4e;white-space:nowrap;">E</div><div style="position:absolute;left:140.3px;top:289.07px;font-family:'Liberation Sans', sans-serif;font-size:20px;line-height:20px;font-weight:400;color:#0c0c4e;white-space:nowrap;">900350947</div><div style="position:absolute;left:244.6px;top:289.07px;font-family:'Liberation Sans', sans-serif;font-size:20px;line-height:20px;font-weight:400;color:#0c0c4e;white-space:nowrap;letter-spacing:-0.245px;">SPAGHETTI RISO 250G</div><div style="position:absolute;right:1273.500px;top:289.07px;font-family:'Liberation Sans', sans-serif;font-size:20px;line-height:20px;font-weight:400;color:#0c0c4e;white-space:nowrap;">0</div><div style="position:absolute;left:650.3px;top:289.07px;font-family:'Liberation Sans', sans-serif;font-size:20px;line-height:20px;font-weight:400;color:#0c0c4e;white-space:nowrap;">P</div><div style="position:absolute;right:1157.500px;top:289.07px;font-family:'Liberation Sans', sans-serif;font-size:20px;line-height:20px;font-weight:400;color:#0c0c4e;white-space:nowrap;">0,00</div><div style="position:absolute;right:1091.500px;top:289.07px;font-family:'Liberation Sans', sans-serif;font-size:20px;line-height:20px;font-weight:400;color:#0c0c4e;white-space:nowrap;">0,00</div><div style="position:absolute;right:1048.500px;top:289.07px;font-family:'Liberation Sans', sans-serif;font-size:20px;line-height:20px;font-weight:400;color:#0c0c4e;white-space:nowrap;">1</div><div style="position:absolute;right:980.500px;top:289.07px;font-family:'Liberation Sans', sans-serif;font-size:20px;line-height:20px;font-weight:400;color:#0c0c4e;white-space:nowrap;">3,25</div><div style="position:absolute;right:913.500px;top:289.07px;font-family:'Liberation Sans', sans-serif;font-size:20px;line-height:20px;font-weight:400;color:#0c0c4e;white-space:nowrap;">3,25</div><div style="position:absolute;right:842.500px;top:289.07px;font-family:'Liberation Sans', sans-serif;font-size:20px;line-height:20px;font-weight:400;color:#0c0c4e;white-space:nowrap;">0,00</div><div style="position:absolute;right:786.500px;top:289.07px;font-family:'Liberation Sans', sans-serif;font-size:20px;line-height:20px;font-weight:400;color:#0c0c4e;white-space:nowrap;">3,25</div><div style="position:absolute;right:715.500px;top:289.07px;font-family:'Liberation Sans', sans-serif;font-size:20px;line-height:20px;font-weight:400;color:#0c0c4e;white-space:nowrap;">0,00</div><div style="position:absolute;right:600.500px;top:289.07px;font-family:'Liberation Sans', sans-serif;font-size:20px;line-height:20px;font-weight:400;color:#0c0c4e;white-space:nowrap;">0,00</div><div style="position:absolute;right:529.500px;top:289.07px;font-family:'Liberation Sans', sans-serif;font-size:20px;line-height:20px;font-weight:400;color:#0c0c4e;white-space:nowrap;">3,25</div><div style="position:absolute;right:455.000px;top:289.07px;font-family:'Liberation Sans', sans-serif;font-size:20px;line-height:20px;font-weight:400;color:#0c0c4e;white-space:nowrap;">0,00</div><div style="position:absolute;right:399.500px;top:289.07px;font-family:'Liberation Sans', sans-serif;font-size:20px;line-height:20px;font-weight:400;color:#0c0c4e;white-space:nowrap;">3,25</div><div style="position:absolute;right:354.500px;top:289.07px;font-family:'Liberation Sans', sans-serif;font-size:20px;line-height:20px;font-weight:400;color:#0c0c4e;white-space:nowrap;">0</div><div style="position:absolute;left:1569px;top:289.07px;font-family:'Liberation Sans', sans-serif;font-size:20px;line-height:20px;font-weight:400;color:#0c0c4e;white-space:nowrap;letter-spacing:-0.642px;">Contanti</div><div style="position:absolute;left:1787.5px;top:289.07px;font-family:'Liberation Sans', sans-serif;font-size:20px;line-height:20px;font-weight:400;color:#0c0c4e;white-space:nowrap;">P</div><div style="position:absolute;left:1854.5px;top:289.07px;font-family:'Liberation Sans', sans-serif;font-size:20px;line-height:20px;font-weight:400;color:#0c0c4e;white-space:nowrap;width:41px;overflow:hidden;">4AA2</div><div style="position:absolute;left:23.2px;top:316.07px;font-family:'Liberation Sans', sans-serif;font-size:20px;line-height:20px;font-weight:400;color:#0c0c4e;white-space:nowrap;">10</div><div style="position:absolute;left:61px;top:316.07px;font-family:'Liberation Sans', sans-serif;font-size:20px;line-height:20px;font-weight:400;color:#0c0c4e;white-space:nowrap;">E</div><div style="position:absolute;left:140.3px;top:316.07px;font-family:'Liberation Sans', sans-serif;font-size:20px;line-height:20px;font-weight:400;color:#0c0c4e;white-space:nowrap;">900337460</div><div style="position:absolute;left:244.6px;top:316.07px;font-family:'Liberation Sans', sans-serif;font-size:20px;line-height:20px;font-weight:400;color:#0c0c4e;white-space:nowrap;letter-spacing:-0.390px;">BIAGLUT PENNE SPINACI 500G</div><div style="position:absolute;right:1273.500px;top:316.07px;font-family:'Liberation Sans', sans-serif;font-size:20px;line-height:20px;font-weight:400;color:#0c0c4e;white-space:nowrap;">0</div><div style="position:absolute;left:650.3px;top:316.07px;font-family:'Liberation Sans', sans-serif;font-size:20px;line-height:20px;font-weight:400;color:#0c0c4e;white-space:nowrap;">P</div><div style="position:absolute;right:1157.500px;top:316.07px;font-family:'Liberation Sans', sans-serif;font-size:20px;line-height:20px;font-weight:400;color:#0c0c4e;white-space:nowrap;">0,00</div><div style="position:absolute;right:1091.500px;top:316.07px;font-family:'Liberation Sans', sans-serif;font-size:20px;line-height:20px;font-weight:400;color:#0c0c4e;white-space:nowrap;">0,00</div><div style="position:absolute;right:1048.500px;top:316.07px;font-family:'Liberation Sans', sans-serif;font-size:20px;line-height:20px;font-weight:400;color:#0c0c4e;white-space:nowrap;">1</div><div style="position:absolute;right:980.500px;top:316.07px;font-family:'Liberation Sans', sans-serif;font-size:20px;line-height:20px;font-weight:400;color:#0c0c4e;white-space:nowrap;">6,24</div><div style="position:absolute;right:913.500px;top:316.07px;font-family:'Liberation Sans', sans-serif;font-size:20px;line-height:20px;font-weight:400;color:#0c0c4e;white-space:nowrap;">6,24</div><div style="position:absolute;right:842.500px;top:316.07px;font-family:'Liberation Sans', sans-serif;font-size:20px;line-height:20px;font-weight:400;color:#0c0c4e;white-space:nowrap;">0,00</div><div style="position:absolute;right:786.500px;top:316.07px;font-family:'Liberation Sans', sans-serif;font-size:20px;line-height:20px;font-weight:400;color:#0c0c4e;white-space:nowrap;">6,24</div><div style="position:absolute;right:715.500px;top:316.07px;font-family:'Liberation Sans', sans-serif;font-size:20px;line-height:20px;font-weight:400;color:#0c0c4e;white-space:nowrap;">0,00</div><div style="position:absolute;right:600.500px;top:316.07px;font-family:'Liberation Sans', sans-serif;font-size:20px;line-height:20px;font-weight:400;color:#0c0c4e;white-space:nowrap;">0,00</div><div style="position:absolute;right:529.500px;top:316.07px;font-family:'Liberation Sans', sans-serif;font-size:20px;line-height:20px;font-weight:400;color:#0c0c4e;white-space:nowrap;">6,24</div><div style="position:absolute;right:455.000px;top:316.07px;font-family:'Liberation Sans', sans-serif;font-size:20px;line-height:20px;font-weight:400;color:#0c0c4e;white-space:nowrap;">0,00</div><div style="position:absolute;right:399.500px;top:316.07px;font-family:'Liberation Sans', sans-serif;font-size:20px;line-height:20px;font-weight:400;color:#0c0c4e;white-space:nowrap;">6,24</div><div style="position:absolute;right:354.500px;top:316.07px;font-family:'Liberation Sans', sans-serif;font-size:20px;line-height:20px;font-weight:400;color:#0c0c4e;white-space:nowrap;">0</div><div style="position:absolute;left:1569px;top:316.07px;font-family:'Liberation Sans', sans-serif;font-size:20px;line-height:20px;font-weight:400;color:#0c0c4e;white-space:nowrap;letter-spacing:-0.642px;">Contanti</div><div style="position:absolute;left:1787.5px;top:316.07px;font-family:'Liberation Sans', sans-serif;font-size:20px;line-height:20px;font-weight:400;color:#0c0c4e;white-space:nowrap;">P</div><div style="position:absolute;left:1854.5px;top:316.07px;font-family:'Liberation Sans', sans-serif;font-size:20px;line-height:20px;font-weight:400;color:#0c0c4e;white-space:nowrap;width:41px;overflow:hidden;">4AA2</div><div style="position:absolute;left:23.2px;top:343.07px;font-family:'Liberation Sans', sans-serif;font-size:20px;line-height:20px;font-weight:400;color:#0c0c4e;white-space:nowrap;">11</div><div style="position:absolute;left:61px;top:343.07px;font-family:'Liberation Sans', sans-serif;font-size:20px;line-height:20px;font-weight:400;color:#0c0c4e;white-space:nowrap;">E</div><div style="position:absolute;left:140.3px;top:343.07px;font-family:'Liberation Sans', sans-serif;font-size:20px;line-height:20px;font-weight:400;color:#0c0c4e;white-space:nowrap;">900083849</div><svg style="position:absolute;left:243px;top:340px" width="27" height="27" viewBox="0 0 27 27"><defs><linearGradient id="xg" x1="0" y1="0" x2="0.3" y2="1"><stop offset="0" stop-color="#ff8a8a"/><stop offset="0.45" stop-color="#f03838"/><stop offset="1" stop-color="#d01c1c"/></linearGradient></defs><g transform="translate(13,13.2) rotate(45)"><path d="M13.30,4.30 L4.30,4.30 L4.30,13.30 L-4.30,13.30 L-4.30,4.30 L-13.30,4.30 L-13.30,-4.30 L-4.30,-4.30 L-4.30,-13.30 L4.30,-13.30 L4.30,-4.30 L13.30,-4.30 Z" fill="url(#xg)" stroke="#a81818" stroke-width="0.9" stroke-linejoin="round"/></g></svg><div style="position:absolute;left:270.3px;top:343.07px;font-family:'Liberation Sans', sans-serif;font-size:20px;line-height:20px;font-weight:400;color:#0c0c4e;white-space:nowrap;letter-spacing:-0.392px;">GLUNO AMARETTI S/GLUT 350G</div><div style="position:absolute;right:1273.500px;top:343.07px;font-family:'Liberation Sans', sans-serif;font-size:20px;line-height:20px;font-weight:400;color:#0c0c4e;white-space:nowrap;">0</div><div style="position:absolute;left:650.3px;top:343.07px;font-family:'Liberation Sans', sans-serif;font-size:20px;line-height:20px;font-weight:400;color:#0c0c4e;white-space:nowrap;">P</div><div style="position:absolute;right:1157.500px;top:343.07px;font-family:'Liberation Sans', sans-serif;font-size:20px;line-height:20px;font-weight:400;color:#0c0c4e;white-space:nowrap;">0,00</div><div style="position:absolute;right:1091.500px;top:343.07px;font-family:'Liberation Sans', sans-serif;font-size:20px;line-height:20px;font-weight:400;color:#0c0c4e;white-space:nowrap;">0,00</div><div style="position:absolute;right:1048.500px;top:343.07px;font-family:'Liberation Sans', sans-serif;font-size:20px;line-height:20px;font-weight:400;color:#0c0c4e;white-space:nowrap;">1</div><div style="position:absolute;right:980.500px;top:343.07px;font-family:'Liberation Sans', sans-serif;font-size:20px;line-height:20px;font-weight:400;color:#0c0c4e;white-space:nowrap;">8,53</div><div style="position:absolute;right:913.500px;top:343.07px;font-family:'Liberation Sans', sans-serif;font-size:20px;line-height:20px;font-weight:400;color:#0c0c4e;white-space:nowrap;">8,53</div><div style="position:absolute;right:842.500px;top:343.07px;font-family:'Liberation Sans', sans-serif;font-size:20px;line-height:20px;font-weight:400;color:#0c0c4e;white-space:nowrap;">0,00</div><div style="position:absolute;right:786.500px;top:343.07px;font-family:'Liberation Sans', sans-serif;font-size:20px;line-height:20px;font-weight:400;color:#0c0c4e;white-space:nowrap;">8,53</div><div style="position:absolute;right:715.500px;top:343.07px;font-family:'Liberation Sans', sans-serif;font-size:20px;line-height:20px;font-weight:400;color:#0c0c4e;white-space:nowrap;">0,00</div><div style="position:absolute;right:600.500px;top:343.07px;font-family:'Liberation Sans', sans-serif;font-size:20px;line-height:20px;font-weight:400;color:#0c0c4e;white-space:nowrap;">0,00</div><div style="position:absolute;right:529.500px;top:343.07px;font-family:'Liberation Sans', sans-serif;font-size:20px;line-height:20px;font-weight:400;color:#0c0c4e;white-space:nowrap;">8,53</div><div style="position:absolute;right:455.000px;top:343.07px;font-family:'Liberation Sans', sans-serif;font-size:20px;line-height:20px;font-weight:400;color:#0c0c4e;white-space:nowrap;">0,00</div><div style="position:absolute;right:399.500px;top:343.07px;font-family:'Liberation Sans', sans-serif;font-size:20px;line-height:20px;font-weight:400;color:#0c0c4e;white-space:nowrap;">8,53</div><div style="position:absolute;right:354.500px;top:343.07px;font-family:'Liberation Sans', sans-serif;font-size:20px;line-height:20px;font-weight:400;color:#0c0c4e;white-space:nowrap;">0</div><div style="position:absolute;left:1569px;top:343.07px;font-family:'Liberation Sans', sans-serif;font-size:20px;line-height:20px;font-weight:400;color:#0c0c4e;white-space:nowrap;letter-spacing:-0.642px;">Contanti</div><div style="position:absolute;left:1787.5px;top:343.07px;font-family:'Liberation Sans', sans-serif;font-size:20px;line-height:20px;font-weight:400;color:#0c0c4e;white-space:nowrap;">P</div><div style="position:absolute;left:1854.5px;top:343.07px;font-family:'Liberation Sans', sans-serif;font-size:20px;line-height:20px;font-weight:400;color:#0c0c4e;white-space:nowrap;width:41px;overflow:hidden;">4AA2</div><div style="position:absolute;left:22px;top:340px;width:1874px;height:2px;background:#0000a8;"></div><div style="position:absolute;left:22px;top:364px;width:1874px;height:2px;background:#0000a8;"></div><svg style="position:absolute;left:13px;top:347px" width="8" height="12"><path d="M0,0 L6,6 L0,12 Z" fill="#000"/></svg><div style="position:absolute;left:1896px;top:77px;width:17px;height:316px;background:#f0f0f0;"></div><svg style="position:absolute;left:1896px;top:80px" width="17" height="16"><path d="M4.5,10 L8.5,6 L12.5,10" stroke="#606060" stroke-width="1.6" fill="none"/></svg><svg style="position:absolute;left:1896px;top:376px" width="17" height="16"><path d="M4.5,6 L8.5,10 L12.5,6" stroke="#606060" stroke-width="1.6" fill="none"/></svg><div style="position:absolute;left:1896px;top:227px;width:15px;height:17px;background:#cdcdcd;"></div><div style="position:absolute;left:6px;top:393px;width:1890px;height:17px;background:#f0f0f0;"></div><svg style="position:absolute;left:8px;top:393px" width="17" height="17"><path d="M10,4.5 L6,8.5 L10,12.5" stroke="#606060" stroke-width="1.6" fill="none"/></svg><svg style="position:absolute;left:1878px;top:393px" width="17" height="17"><path d="M6,4.5 L10,8.5 L6,12.5" stroke="#606060" stroke-width="1.6" fill="none"/></svg><div style="position:absolute;left:25px;top:394px;width:17px;height:15px;background:#cdcdcd;"></div><div style="position:absolute;left:1896px;top:393px;width:17px;height:17px;background:#f0f0f0;"></div><div style="position:absolute;left:6px;top:409px;width:1908px;height:1px;background:#a0a0a0;"></div><svg style="position:absolute;left:4px;top:420px" width="40" height="36" viewBox="0 0 40 36"><path d="M4,15.2 L19.7,15.2 L13.1,7.1 L21.8,7.1 L32.6,18 L21.8,28.7 L13.1,28.7 L19.7,20.7 L4,20.7 Z" fill="#f20c0c" stroke="#a00000" stroke-width="0.5"/></svg><div style="position:absolute;left:43px;top:421px;width:400px;height:32px;border:1px solid #7a7a7a;background:#fff;"></div><div style="position:absolute;left:46.5px;top:425.42px;font-family:'Liberation Sans', sans-serif;font-size:21.3px;line-height:21.3px;font-weight:700;color:#000;white-space:nowrap;letter-spacing:-0.077px;">900328877</div><div style="position:absolute;left:6px;top:466px;width:205px;height:38px;background:#fff;border-top:1px solid #e0e0e0;"></div><div style="position:absolute;left:211px;top:468px;width:220px;height:36px;background:#f0f0f0;border:1px solid #d8d8d8;border-bottom:none;"></div><div style="position:absolute;left:109px;top:474.02px;font-family:'Liberation Sans', sans-serif;font-size:20px;line-height:20px;font-weight:700;color:#000;white-space:nowrap;">Info</div><svg style="position:absolute;left:70px;top:466px" width="36" height="34" viewBox="0 0 36 34"><defs><radialGradient id="qb" cx="0.45" cy="0.45" r="0.6"><stop offset="0" stop-color="#fffce8"/><stop offset="0.65" stop-color="#fbecb8"/><stop offset="1" stop-color="#f4d090"/></radialGradient></defs><path d="M16.8,2.9 C25,2.9 31.6,8.2 31.6,14.8 C31.6,21.4 25,26.7 16.8,26.7 C15.5,26.7 14.5,26.6 13.5,26.4 L7,30.5 L8.6,24.2 C4.6,22 2,18.6 2,14.8 C2,8.2 8.6,2.9 16.8,2.9 Z" fill="url(#qb)" stroke="#8e6a4c" stroke-width="1"/><text x="16.8" y="22.3" text-anchor="middle" font-family="Liberation Sans" font-weight="700" font-size="21" fill="#d2703c">?</text></svg><svg style="position:absolute;left:252px;top:472px" width="30" height="30" viewBox="0 0 30 30"><path d="M8,9 C8,5 14,6 14,3 L15,0" stroke="#777" stroke-width="1.2" fill="none"/><rect x="2" y="11" width="28" height="16" rx="2" fill="#d8dde4" stroke="#8a9099"/><g fill="#fff"><rect x="5" y="14" width="3" height="2"/><rect x="10" y="14" width="3" height="2"/><rect x="15" y="14" width="3" height="2"/><rect x="20" y="14" width="3" height="2"/><rect x="25" y="14" width="3" height="2"/><rect x="5" y="18" width="3" height="2"/><rect x="10" y="18" width="3" height="2"/><rect x="15" y="18" width="3" height="2"/><rect x="20" y="18" width="3" height="2"/><rect x="25" y="18" width="3" height="2"/><rect x="5" y="22" width="22" height="2"/></g></svg><div style="position:absolute;left:6px;top:504px;width:1421px;height:397px;background:#fff;border-right:1px solid #dcdcdc;border-bottom:1px solid #dcdcdc;"></div><svg style="position:absolute;left:15px;top:511px" width="17" height="17" viewBox="0 0 17 17"><rect x="2.5" y="1.5" width="12" height="14.5" fill="#fff" stroke="#000"/><path d="M9.5,1.5 L14.5,6" stroke="#000" fill="none"/><path d="M5,10 H13 M5,12.5 H13 M7,10 V15 M10,10 V15" stroke="#000" stroke-width="0.8"/><circle cx="5" cy="5" r="3.6" fill="#f4f080" stroke="#90a040" stroke-width="0.8"/><path d="M4,7 L9,2" stroke="#000" stroke-width="1"/></svg><div style="position:absolute;left:36px;top:516.28px;font-family:'Liberation Sans', sans-serif;font-size:13.2px;line-height:13.2px;font-weight:700;color:#2c8c2c;white-space:nowrap;letter-spacing:0.055px;">Informazioni riferite al prodotto:</div><div style="position:absolute;left:243.5px;top:512.02px;font-family:'Liberation Sans', sans-serif;font-size:20px;line-height:20px;font-weight:700;color:#1414c8;white-space:nowrap;">DS MILLEFOGLIE</div><svg style="position:absolute;left:17px;top:536px" width="14" height="12" viewBox="0 0 14 12"><path d="M1.5,1 L12.5,11 M12.5,1 L1.5,11" stroke="#c01818" stroke-width="2.6"/><circle cx="7" cy="6" r="2" fill="#000"/><circle cx="7" cy="1.5" r="1.3" fill="#000"/></svg><div style="position:absolute;left:32.5px;top:536.45px;font-family:'Liberation Sans', sans-serif;font-size:15px;line-height:15px;font-weight:700;color:#d01818;white-space:nowrap;text-decoration:underline;letter-spacing:0.091px;">Regime SSN / SSR:</div><div style="position:absolute;left:172.5px;top:536.45px;font-family:'Liberation Sans', sans-serif;font-size:15px;line-height:15px;font-weight:700;color:#1414c0;white-space:nowrap;letter-spacing:0.605px;">NON CONCESSO</div><svg style="position:absolute;left:17px;top:558px" width="14" height="13" viewBox="0 0 14 13"><path d="M1.5,1 L12.5,12 M12.5,1 L1.5,12" stroke="#c01818" stroke-width="2.6"/><circle cx="7" cy="6.5" r="2" fill="#000"/><circle cx="7" cy="1.5" r="1.3" fill="#000"/></svg><div style="position:absolute;left:32.5px;top:556.95px;font-family:'Liberation Sans', sans-serif;font-size:17.6px;line-height:17.6px;font-weight:700;color:#dc1414;white-space:nowrap;letter-spacing:0.693px;">Attenzione, prodotto NON</div><svg style="position:absolute;left:15px;top:577px" width="16" height="16" viewBox="0 0 16 16"><circle cx="8" cy="8" r="6.4" fill="none" stroke="#c01818" stroke-width="2.1"/><path d="M3.6,12.4 L12.4,3.6" stroke="#c01818" stroke-width="2.1"/></svg><div style="position:absolute;left:32.5px;top:581.19px;font-family:'Liberation Sans', sans-serif;font-size:13.3px;line-height:13.3px;font-weight:700;color:#d01818;white-space:nowrap;white-space:pre;letter-spacing:0.635px;">Attenzione,  Limite Vendibilità</div><div style="position:absolute;left:245.7px;top:582.29px;font-family:'Liberation Sans', sans-serif;font-size:12px;line-height:12px;font-weight:700;color:#000;white-space:nowrap;letter-spacing:1.268px;">Motivo</div><div style="position:absolute;left:16.5px;top:597.09px;font-family:'Liberation Sans', sans-serif;font-size:18.5px;line-height:18.5px;font-weight:700;color:#108a10;white-space:nowrap;">€</div><div style="position:absolute;left:36.5px;top:601.52px;font-family:'Liberation Sans', sans-serif;font-size:14.8px;line-height:14.8px;font-weight:700;color:#d01818;white-space:nowrap;white-space:pre;letter-spacing:-0.152px;">Condizioni :</div><div style="position:absolute;left:124.7px;top:601.52px;font-family:'Liberation Sans', sans-serif;font-size:14.8px;line-height:14.8px;font-weight:700;color:#1414c0;white-space:nowrap;letter-spacing:0.634px;">Prezzo al pubblico</div><svg style="position:absolute;left:15px;top:619px" width="16" height="16"><defs><linearGradient id="pg" x1="0" y1="0" x2="0" y2="1"><stop offset="0" stop-color="#2838c8"/><stop offset="0.6" stop-color="#101880"/><stop offset="1" stop-color="#000010"/></linearGradient></defs><rect width="16" height="16" fill="url(#pg)"/><circle cx="5" cy="4" r="0.8" fill="#fff"/><circle cx="11" cy="7" r="0.8" fill="#fff"/><circle cx="8" cy="11" r="0.7" fill="#fff"/></svg><div style="position:absolute;left:32.8px;top:624.85px;font-family:'Liberation Sans', sans-serif;font-size:12.4px;line-height:12.4px;font-weight:700;color:#1818a0;white-space:nowrap;letter-spacing:-0.651px;">Produttore:</div><div style="position:absolute;left:99.2px;top:624.85px;font-family:'Liberation Sans', sans-serif;font-size:12.4px;line-height:12.4px;font-weight:700;color:#101060;white-space:nowrap;letter-spacing:-0.152px;">DR.SCHAR SPA</div><div style="position:absolute;left:196px;top:624.85px;font-family:'Liberation Sans', sans-serif;font-size:12.4px;line-height:12.4px;font-weight:700;color:#1818a0;white-space:nowrap;letter-spacing:0.054px;">Telefono: +39</div><svg style="position:absolute;left:16px;top:640px" width="15" height="15" viewBox="0 0 15 15"><rect x="1" y="2" width="9" height="12" fill="#fff" stroke="#000"/><path d="M3,5 H8 M3,8 H8 M3,11 H8" stroke="#000"/><path d="M8,8.5 L14,8.5 M11.5,6 L14,8.5 L11.5,11" stroke="#e02020" stroke-width="1.4" fill="none"/><rect x="3" y="0.5" width="5" height="2" fill="#f0e060" stroke="#000" stroke-width="0.6"/></svg><div style="position:absolute;left:36.8px;top:644.61px;font-family:'Liberation Sans', sans-serif;font-size:12.8px;line-height:12.8px;font-weight:700;color:#101060;white-space:nowrap;letter-spacing:-0.409px;">Senza giacenza</div><svg style="position:absolute;left:17px;top:661px" width="14" height="15" viewBox="0 0 14 15"><path d="M0.5,0.5 H13.5 V10.5 H6 L2.5,14 V10.5 H0.5 Z" fill="#fff" stroke="#000"/><path d="M3,3.5 H11 M3,5.5 H11 M3,7.5 H11" stroke="#000" stroke-width="0.9"/></svg><div style="position:absolute;left:32.8px;top:665.87px;font-family:'Liberation Sans', sans-serif;font-size:12.5px;line-height:12.5px;font-weight:700;color:#000;white-space:nowrap;letter-spacing:-0.278px;">Classe / Divisione Merceologica:</div><div style="position:absolute;left:238.5px;top:660.49px;font-family:'Liberation Sans', sans-serif;font-size:18.5px;line-height:18.5px;font-weight:700;color:#d81818;white-space:nowrap;">P</div><div style="position:absolute;left:266px;top:663.75px;font-family:'Liberation Sans', sans-serif;font-size:15px;line-height:15px;font-weight:700;color:#1414c0;white-space:nowrap;text-decoration:underline;">F</div><svg style="position:absolute;left:16px;top:681px" width="15" height="15" viewBox="0 0 15 15"><circle cx="7.5" cy="8.5" r="5.8" fill="#fff" stroke="#000" stroke-width="1.3"/><path d="M7.5,8.5 L7.5,4.5 M5.5,1 H9.5 M7.5,1 V2.7 M12,3 L13,4" stroke="#000" stroke-width="1.2"/></svg><div style="position:absolute;left:36.8px;top:686.61px;font-family:'Liberation Sans', sans-serif;font-size:12.8px;line-height:12.8px;font-weight:700;color:#000;white-space:nowrap;letter-spacing:-0.519px;">Data ultima variazione:</div><div style="position:absolute;left:170.6px;top:686.61px;font-family:'Liberation Sans', sans-serif;font-size:12.8px;line-height:12.8px;font-weight:700;color:#101070;white-space:nowrap;letter-spacing:0.371px;">01/01/2008</div><div style="position:absolute;left:246.5px;top:686.61px;font-family:'Liberation Sans', sans-serif;font-size:12.8px;line-height:12.8px;font-weight:700;color:#000;white-space:nowrap;">-</div><div style="position:absolute;left:258px;top:686.61px;font-family:'Liberation Sans', sans-serif;font-size:12.8px;line-height:12.8px;font-weight:700;color:#000;white-space:nowrap;letter-spacing:0.549px;">Prezzo</div><svg style="position:absolute;left:16px;top:702px" width="14" height="12" viewBox="0 0 14 12"><path d="M0.5,0 V11.5 H14" stroke="#000" stroke-width="1" stroke-dasharray="1,1" fill="none"/><rect x="3" y="6" width="2.5" height="5" fill="#20a0a0"/><rect x="6" y="3" width="2.5" height="8" fill="#1010a0"/><rect x="9" y="1" width="3" height="10" fill="#d020d0"/></svg><div style="position:absolute;left:32.8px;top:705.25px;font-family:'Liberation Sans', sans-serif;font-size:13px;line-height:13px;font-weight:700;color:#e040e0;white-space:nowrap;letter-spacing:0.226px;">Temperatura:</div><div style="position:absolute;left:126.6px;top:705.67px;font-family:'Liberation Sans', sans-serif;font-size:12.5px;line-height:12.5px;font-weight:700;color:#101060;white-space:nowrap;letter-spacing:0.153px;">PARI O INFERIORE A -18</div><div style="position:absolute;left:15px;top:720.77px;font-family:'Liberation Sans', sans-serif;font-size:11.2px;line-height:11.2px;font-weight:700;color:#000;white-space:nowrap;letter-spacing:0.562px;">E&#x27; stata sostituita dalla confezione con codice</div><svg style="position:absolute;left:15px;top:734px" width="16" height="16" viewBox="0 0 16 16"><rect x="5" y="0.5" width="10" height="14" fill="#fff" stroke="#000"/><path d="M7,4 H13 M7,7 H13 M7,10 H13" stroke="#000" stroke-width="0.8"/><rect x="0.5" y="6" width="9" height="7" fill="#f0f080" stroke="#000" stroke-width="0.8"/></svg><div style="position:absolute;left:36.2px;top:739.12px;font-family:'Liberation Sans', sans-serif;font-size:12.2px;line-height:12.2px;font-weight:700;color:#1818a0;white-space:nowrap;letter-spacing:-0.459px;">Avvisi:</div><div style="position:absolute;left:78.75px;top:739.12px;font-family:'Liberation Sans', sans-serif;font-size:12.2px;line-height:12.2px;font-weight:700;color:#101060;white-space:nowrap;letter-spacing:0.164px;">*NON ELENCATO NEL REGISTRO</div><div style="position:absolute;left:1656px;top:413px;width:255px;height:30px;background:#0a800a;border:1px solid #1a3a1a;"></div><div style="position:absolute;left:1702.6px;top:418.12px;font-family:'Liberation Sans', sans-serif;font-size:20px;line-height:20px;font-weight:700;color:#f8f820;white-space:nowrap;letter-spacing:0.408px;">Vendita in corso</div><div style="position:absolute;left:1656px;top:487px;width:255px;height:30px;background:#dde9e9;border:1px solid #202020;"></div><div style="position:absolute;left:1712.4px;top:492.52px;font-family:'Liberation Sans', sans-serif;font-size:20px;line-height:20px;font-weight:700;color:#000;white-space:nowrap;letter-spacing:0.315px;">Celiachia DEM</div><div style="position:absolute;left:1656px;top:524px;width:255px;height:30px;background:#dde9e9;border:1px solid #202020;"></div><div style="position:absolute;left:1721.6px;top:528.52px;font-family:'Liberation Sans', sans-serif;font-size:20px;line-height:20px;font-weight:400;color:#000;white-space:nowrap;letter-spacing:0.503px;">Residuo 2,93</div><div style="position:absolute;left:1437px;top:505.52px;font-family:'Liberation Sans', sans-serif;font-size:20px;line-height:20px;font-weight:700;color:#000;white-space:nowrap;">tk</div><div style="position:absolute;left:1458px;top:499px;width:69px;height:32px;background:#f0f0f0;border:1px solid #a8a8a8;"></div><div style="position:absolute;right:398.000px;top:504.52px;font-family:'Liberation Sans', sans-serif;font-size:20px;line-height:20px;font-weight:400;color:#e01818;white-space:nowrap;">0,00</div><div style="position:absolute;right:364.412px;top:545.98px;font-family:'Liberation Sans', sans-serif;font-size:20.4px;line-height:20.4px;font-weight:700;color:#000;white-space:nowrap;letter-spacing:0.088px;">Prenotati:</div><div style="position:absolute;left:1558px;top:538px;width:87px;height:32px;border:1px solid #a8a8a8;background:#fff;"></div><div style="position:absolute;right:364.293px;top:581.18px;font-family:'Liberation Sans', sans-serif;font-size:20.4px;line-height:20.4px;font-weight:700;color:#000;white-space:nowrap;letter-spacing:0.207px;">Pren.Agg.:</div><div style="position:absolute;left:1558px;top:573px;width:87px;height:32px;border:1px solid #a8a8a8;background:#fff;"></div><div style="position:absolute;right:279.000px;top:578.82px;font-family:'Liberation Sans', sans-serif;font-size:20px;line-height:20px;font-weight:700;color:#000;white-space:nowrap;">0</div><div style="position:absolute;right:364.332px;top:615.68px;font-family:'Liberation Sans', sans-serif;font-size:20.4px;line-height:20.4px;font-weight:700;color:#000;white-space:nowrap;letter-spacing:0.168px;">Prop/Ven.:</div><div style="position:absolute;left:1558px;top:608px;width:87px;height:32px;border:1px solid #a8a8a8;background:#fff;"></div><div style="position:absolute;right:279.000px;top:614.02px;font-family:'Liberation Sans', sans-serif;font-size:20px;line-height:20px;font-weight:700;color:#000;white-space:nowrap;">0</div><div style="position:absolute;right:364.260px;top:652.88px;font-family:'Liberation Sans', sans-serif;font-size:20.4px;line-height:20.4px;font-weight:700;color:#000;white-space:nowrap;letter-spacing:0.240px;">Rinv/Man.:</div><div style="position:absolute;left:1558px;top:645px;width:44px;height:32px;border:1px solid #a8a8a8;background:#fff;"></div><div style="position:absolute;left:1601px;top:645px;width:44px;height:32px;border:1px solid #a8a8a8;background:#fff;"></div><div style="position:absolute;right:321.500px;top:650.32px;font-family:'Liberation Sans', sans-serif;font-size:20px;line-height:20px;font-weight:700;color:#000;white-space:nowrap;">0</div><div style="position:absolute;right:279.000px;top:650.32px;font-family:'Liberation Sans', sans-serif;font-size:20px;line-height:20px;font-weight:700;color:#000;white-space:nowrap;">0</div><div style="position:absolute;right:364.341px;top:690.18px;font-family:'Liberation Sans', sans-serif;font-size:20.4px;line-height:20.4px;font-weight:700;color:#000;white-space:nowrap;letter-spacing:0.159px;">Ord.Ap/S.:</div><div style="position:absolute;left:1558px;top:682px;width:44px;height:32px;border:1px solid #a8a8a8;background:#fff;"></div><div style="position:absolute;left:1601px;top:682px;width:44px;height:32px;border:1px solid #a8a8a8;background:#fff;"></div><div style="position:absolute;right:321.500px;top:686.92px;font-family:'Liberation Sans', sans-serif;font-size:20px;line-height:20px;font-weight:700;color:#000;white-space:nowrap;">0</div><div style="position:absolute;right:279.000px;top:686.92px;font-family:'Liberation Sans', sans-serif;font-size:20px;line-height:20px;font-weight:700;color:#000;white-space:nowrap;">0</div><div style="position:absolute;right:364.450px;top:726.68px;font-family:'Liberation Sans', sans-serif;font-size:20.4px;line-height:20.4px;font-weight:700;color:#000;white-space:nowrap;letter-spacing:0.050px;">Arr.Gr/Dt:</div><div style="position:absolute;left:1558px;top:719px;width:44px;height:32px;border:1px solid #a8a8a8;background:#fff;"></div><div style="position:absolute;left:1601px;top:719px;width:44px;height:32px;border:1px solid #a8a8a8;background:#fff;"></div><div style="position:absolute;right:321.500px;top:724.02px;font-family:'Liberation Sans', sans-serif;font-size:20px;line-height:20px;font-weight:700;color:#000;white-space:nowrap;">0</div><div style="position:absolute;right:279.000px;top:724.02px;font-family:'Liberation Sans', sans-serif;font-size:20px;line-height:20px;font-weight:700;color:#000;white-space:nowrap;">0</div><div style="position:absolute;right:135.262px;top:624.18px;font-family:'Liberation Sans', sans-serif;font-size:20.4px;line-height:20.4px;font-weight:700;color:#000;white-space:nowrap;letter-spacing:0.238px;">Pz.Ven/Pre:</div><div style="position:absolute;left:1787px;top:616px;width:29px;height:35px;background:#f40000;border:1px solid #a00000;"></div><div style="position:absolute;left:1787.0px;width:29px;text-align:center;top:623.83px;font-family:'Liberation Sans', sans-serif;font-size:22px;line-height:22px;font-weight:700;color:#ffe020;white-space:nowrap;">?</div><div style="position:absolute;left:1847px;top:616px;width:61px;height:36px;background:#f0f0f0;border:1px solid #b8b8b8;"></div><div style="position:absolute;right:16.500px;top:624.10px;font-family:'Liberation Sans', sans-serif;font-size:20.5px;line-height:20.5px;font-weight:700;color:#000;white-space:nowrap;">0</div><div style="position:absolute;right:98.841px;top:666.18px;font-family:'Liberation Sans', sans-serif;font-size:20.4px;line-height:20.4px;font-weight:700;color:#000;white-space:nowrap;letter-spacing:0.159px;">Pz. Resi:</div><div style="position:absolute;left:1822px;top:657px;width:86px;height:37px;background:#f0f0f0;border:1px solid #b8b8b8;"></div><div style="position:absolute;right:16.500px;top:665.60px;font-family:'Liberation Sans', sans-serif;font-size:20.5px;line-height:20.5px;font-weight:700;color:#000;white-space:nowrap;">0</div><div style="position:absolute;right:98.754px;top:747.48px;font-family:'Liberation Sans', sans-serif;font-size:20.4px;line-height:20.4px;font-weight:700;color:#000;white-space:nowrap;letter-spacing:0.246px;">Sconto:</div><div style="position:absolute;left:1822px;top:739px;width:86px;height:37px;background:#f0f0f0;border:1px solid #b8b8b8;"></div><div style="position:absolute;right:16.500px;top:747.40px;font-family:'Liberation Sans', sans-serif;font-size:20.5px;line-height:20.5px;font-weight:700;color:#108010;white-space:nowrap;">0,00</div><div style="position:absolute;right:164.890px;top:792.68px;font-family:'Liberation Sans', sans-serif;font-size:20.4px;line-height:20.4px;font-weight:700;color:#000;white-space:nowrap;letter-spacing:0.110px;">T.Merce:</div><div style="position:absolute;left:1757px;top:782px;width:151px;height:40px;background:#f0f0f0;border:1px solid #b8b8b8;"></div><div style="position:absolute;right:17.033px;top:787.14px;font-family:'Liberation Sans', sans-serif;font-size:26px;line-height:26px;font-weight:700;color:#000;white-space:nowrap;letter-spacing:0.467px;">92,11</div><div style="position:absolute;right:12.427px;top:826.18px;font-family:'Liberation Sans', sans-serif;font-size:20.4px;line-height:20.4px;font-weight:700;color:#000;white-space:nowrap;letter-spacing:0.073px;">Totale Vendita:</div><div style="position:absolute;left:1681px;top:852px;width:227px;height:44px;background:#f0f0f0;border:1px solid #b0b0b0;"></div><div style="position:absolute;right:17.363px;top:858.56px;font-family:'Liberation Sans', sans-serif;font-size:29.4px;line-height:29.4px;font-weight:700;color:#e01818;white-space:nowrap;letter-spacing:0.637px;">92,11</div><div style="position:absolute;left:14px;top:910px;width:338px;height:30px;border:1px solid #6a6a6a;background:#fff;"></div><div style="position:absolute;left:17.5px;top:915.52px;font-family:'Liberation Sans', sans-serif;font-size:20px;line-height:20px;font-weight:400;color:#000;white-space:nowrap;letter-spacing:0.3px;">Asl: A.S.P. Cosenza</div><div style="position:absolute;left:361px;top:910px;width:336px;height:30px;border:1px solid #6a6a6a;background:#fff;"></div><div style="position:absolute;left:365.5px;top:915.52px;font-family:'Liberation Sans', sans-serif;font-size:20px;line-height:20px;font-weight:400;color:#000;white-space:nowrap;letter-spacing:0.45px;">Ricetta: Esenti - Pat. e Red.</div><div style="position:absolute;left:706px;top:910px;width:336px;height:30px;background:#ff0000;border:1px solid #5a0000;"></div><div style="position:absolute;left:708.5px;top:915.12px;font-family:'Liberation Sans', sans-serif;font-size:20px;line-height:20px;font-weight:400;color:#ffd800;white-space:nowrap;letter-spacing:0.1px;">Vendita in CONTANTI</div><div style="position:absolute;left:1271px;top:910px;width:195px;height:31px;background:#ff0000;border:1px solid #5a0000;"></div><div style="position:absolute;left:1282.5px;top:915.22px;font-family:'Liberation Sans', sans-serif;font-size:20px;line-height:20px;font-weight:400;color:#ffd800;white-space:nowrap;letter-spacing:0.35px;">AutoChiusura OFF</div><div style="position:absolute;left:1614px;top:910px;width:58px;height:31px;background:#b4b4b4;border:1px solid #303030;"></div><div style="position:absolute;left:1623px;top:915.52px;font-family:'Liberation Sans', sans-serif;font-size:20px;line-height:20px;font-weight:400;color:#3cb83c;white-space:nowrap;letter-spacing:0.031px;">Fine</div><div style="position:absolute;left:1680px;top:910px;width:111px;height:31px;background:#00ff00;border:1px solid #303030;"></div><div style="position:absolute;left:1692px;top:915.52px;font-family:'Liberation Sans', sans-serif;font-size:20px;line-height:20px;font-weight:400;color:#28d228;white-space:nowrap;letter-spacing:0.500px;">Sospendi</div><div style="position:absolute;left:1799px;top:910px;width:107px;height:31px;background:#00ff00;border:1px solid #303030;"></div><div style="position:absolute;left:1808px;top:915.52px;font-family:'Liberation Sans', sans-serif;font-size:20px;line-height:20px;font-weight:400;color:#28d228;white-space:nowrap;letter-spacing:0.325px;">Recupera</div><div style="position:absolute;left:0px;top:954px;width:1920px;height:86px;background:#fcfcfc;border-top:1px solid #c4c4c4;"></div><div style="position:absolute;left:0px;top:1040px;width:1920px;height:2px;background:#1a1a1a;"></div><div style="position:absolute;left:2px;top:957px;width:318px;height:40px;background:#e1e1e1;border:1px solid #a9a9a9;"></div><div style="position:absolute;left:2.0px;width:318px;text-align:center;top:968.33px;font-family:'Liberation Sans', sans-serif;font-size:19.4px;line-height:19.4px;font-weight:700;color:#101070;white-space:nowrap;">F1 Normali C/Ticket</div><div style="position:absolute;left:321px;top:957px;width:318px;height:40px;background:#e1e1e1;border:1px solid #a9a9a9;"></div><div style="position:absolute;left:321.0px;width:318px;text-align:center;top:968.33px;font-family:'Liberation Sans', sans-serif;font-size:19.4px;line-height:19.4px;font-weight:700;color:#101070;white-space:nowrap;">F2 Esenti - Pat. e Red.</div><div style="position:absolute;left:640px;top:957px;width:318px;height:40px;background:#e1e1e1;border:1px solid #a9a9a9;"></div><div style="position:absolute;left:640.0px;width:318px;text-align:center;top:968.33px;font-family:'Liberation Sans', sans-serif;font-size:19.4px;line-height:19.4px;font-weight:700;color:#101070;white-space:nowrap;">F3 Ev.S/Dif.S/Tck</div><div style="position:absolute;left:959px;top:957px;width:318px;height:40px;background:#e1e1e1;border:1px solid #a9a9a9;"></div><div style="position:absolute;left:959.0px;width:318px;text-align:center;top:968.33px;font-family:'Liberation Sans', sans-serif;font-size:19.4px;line-height:19.4px;font-weight:700;color:#101070;white-space:nowrap;">F4 Altre chiusure</div><div style="position:absolute;left:1278px;top:957px;width:318px;height:40px;background:#e1e1e1;border:1px solid #a9a9a9;"></div><div style="position:absolute;left:1278.0px;width:318px;text-align:center;top:968.33px;font-family:'Liberation Sans', sans-serif;font-size:19.4px;line-height:19.4px;font-weight:700;color:#101070;white-space:nowrap;">F5 Contanti</div><div style="position:absolute;left:1597px;top:957px;width:321px;height:40px;background:#e1e1e1;border:1px solid #a9a9a9;"></div><div style="position:absolute;left:1597.0px;width:321px;text-align:center;top:968.33px;font-family:'Liberation Sans', sans-serif;font-size:19.4px;line-height:19.4px;font-weight:700;color:#101070;white-space:nowrap;">F6 Sconta Vendita</div><div style="position:absolute;left:2px;top:999px;width:318px;height:40px;background:#e1e1e1;border:1px solid #a9a9a9;"></div><div style="position:absolute;left:2.0px;width:318px;text-align:center;top:1010.33px;font-family:'Liberation Sans', sans-serif;font-size:19.4px;line-height:19.4px;font-weight:700;color:#101070;white-space:nowrap;">F7 Scontrino Fiscale</div><div style="position:absolute;left:321px;top:999px;width:318px;height:40px;background:#e1e1e1;border:1px solid #a9a9a9;"></div><div style="position:absolute;left:321.0px;width:318px;text-align:center;top:1010.33px;font-family:'Liberation Sans', sans-serif;font-size:19.4px;line-height:19.4px;font-weight:700;color:#101070;white-space:nowrap;">F8 Totale Cliente</div><div style="position:absolute;left:640px;top:999px;width:318px;height:40px;background:#e1e1e1;border:1px solid #a9a9a9;"></div><div style="position:absolute;left:640.0px;width:318px;text-align:center;top:1010.33px;font-family:'Liberation Sans', sans-serif;font-size:19.4px;line-height:19.4px;font-weight:700;color:#101070;white-space:nowrap;">F9 Equivalenti</div><div style="position:absolute;left:959px;top:999px;width:318px;height:40px;background:#e1e1e1;border:1px solid #a9a9a9;"></div><div style="position:absolute;left:959.0px;width:318px;text-align:center;top:1010.33px;font-family:'Liberation Sans', sans-serif;font-size:19.4px;line-height:19.4px;font-weight:700;color:#101070;white-space:nowrap;">F10 Altro</div><div style="position:absolute;left:1278px;top:999px;width:318px;height:40px;background:#e1e1e1;border:1px solid #a9a9a9;"></div><svg style="position:absolute;left:1381px;top:1002px" width="31" height="31" viewBox="0 0 31 31"><defs><linearGradient id="ig" x1="0" y1="0" x2="1" y2="1"><stop offset="0" stop-color="#4c7aa8"/><stop offset="1" stop-color="#6aa0d0"/></linearGradient></defs><path d="M16,1.8 L29.6,15.6 L16,29.4 L2.4,15.6 Z" fill="#eaf8ff" stroke="#4a5866" stroke-width="1.3" stroke-linejoin="round"/><path d="M16,5.4 L26.2,15.6 L16,25.8 L5.8,15.6 Z" fill="url(#ig)"/><circle cx="16" cy="11" r="1.9" fill="#e8f8ff"/><path d="M14.2,13.3 H17.3 V20.5 H18.2 V21.8 H13.8 V20.5 H14.7 V14.6 H14.2 Z" fill="#e8f8ff"/></svg><div style="position:absolute;left:1415px;top:1010.37px;font-family:'Liberation Sans', sans-serif;font-size:19px;line-height:19px;font-weight:700;color:#101070;white-space:nowrap;">F11 Help</div><div style="position:absolute;left:1597px;top:999px;width:321px;height:40px;background:#e1e1e1;border:1px solid #a9a9a9;"></div><svg style="position:absolute;left:1702px;top:1002px" width="32" height="33" viewBox="0 0 32 33"><defs><linearGradient id="eg" x1="0" y1="0" x2="0.3" y2="1"><stop offset="0" stop-color="#b8f0fc"/><stop offset="1" stop-color="#28c0ec"/></linearGradient><linearGradient id="eg2" x1="0" y1="0" x2="1" y2="1"><stop offset="0" stop-color="#70d8f4"/><stop offset="1" stop-color="#30c0ea"/></linearGradient></defs><path d="M1.3,1.4 L17.6,1.4 L17.6,5.6 L8.6,5.6 L8.6,27 L17.6,27 L17.6,31.5 L1.3,31.5 Z" fill="url(#eg)" stroke="#2e7890" stroke-width="1.1" stroke-linejoin="round"/><path d="M12.4,13.2 L21.7,13.2 L21.7,8.2 L30.4,16.4 L21.7,24.6 L21.7,19.4 L12.4,19.4 Z" fill="url(#eg2)" stroke="#2e7890" stroke-width="1.1" stroke-linejoin="round"/></svg><div style="position:absolute;left:1736px;top:1010.37px;font-family:'Liberation Sans', sans-serif;font-size:19px;line-height:19px;font-weight:700;color:#101070;white-space:nowrap;">F12 Esci</div><svg style="position:absolute;left:1267px;top:959px" width="9" height="9"><path d="M0,0 L9,0 L9,9 Z" fill="#0a0a6a"/></svg><svg style="position:absolute;left:1267px;top:1001px" width="9" height="9"><path d="M0,0 L9,0 L9,9 Z" fill="#0a0a6a"/></svg><svg style="position:absolute;left:1585px;top:1001px" width="9" height="9"><path d="M0,0 L9,0 L9,9 Z" fill="#0a0a6a"/></svg><div style="position:absolute;left:270px;top:377px;width:1148px;height:449px;background:#fff;box-shadow:2px 3px 14px rgba(0,0,0,0.38);border:1px solid #646464;"></div><div style="position:absolute;left:271px;top:403px;width:1146px;height:36px;background:linear-gradient(90deg,#6c6c6c 0%,#6e6e6e 3%,#b4b4b4 50%,#fafafa 98%);border-bottom:1px solid #707070;"></div><div style="position:absolute;left:281.3px;top:414.33px;font-family:'Liberation Sans', sans-serif;font-size:15.5px;line-height:15.5px;font-weight:700;color:#fff;white-space:nowrap;letter-spacing:-0.250px;">Conferma</div><svg style="position:absolute;left:1383px;top:405px" width="32" height="32" viewBox="0 0 32 32"><defs><radialGradient id="hg" cx="0.35" cy="0.3" r="0.8"><stop offset="0" stop-color="#5a86e0"/><stop offset="0.55" stop-color="#2048b0"/><stop offset="1" stop-color="#102c88"/></radialGradient></defs><circle cx="16" cy="16" r="15" fill="#e8eef8" stroke="#7a8aa8" stroke-width="1"/><circle cx="16" cy="16" r="13" fill="url(#hg)"/><path d="M11.5,12 C11.5,8.5 14,7 16.5,7 C19.5,7 21.5,9 21.5,11.5 C21.5,14.5 17.5,15 17.5,18 L14.5,18 C14.5,14 18,13.5 18,11.5 C18,10.3 17.3,9.7 16.3,9.7 C15.2,9.7 14.5,10.5 14.5,12 Z" fill="#f0f4fa"/><circle cx="16" cy="22" r="2" fill="#f0f4fa"/></svg><div style="position:absolute;left:291.5px;top:471.83px;font-family:'Liberation Sans', sans-serif;font-size:16.8px;line-height:16.8px;font-weight:700;color:#0c0c5c;white-space:nowrap;letter-spacing:0.180px;">Attenzione, con questo prodotto si supera il valore del buono per € 2,34</div><div style="position:absolute;left:291.5px;top:490.58px;font-family:'Liberation Sans', sans-serif;font-size:16.8px;line-height:16.8px;font-weight:700;color:#0c0c5c;white-space:nowrap;letter-spacing:0.251px;">Importo residuo originario 95,04</div><div style="position:absolute;left:291.5px;top:509.33px;font-family:'Liberation Sans', sans-serif;font-size:16.8px;line-height:16.8px;font-weight:700;color:#0c0c5c;white-space:nowrap;letter-spacing:0.483px;">Valore vendita attuale 97,38</div><div style="position:absolute;left:291.5px;top:528.33px;font-family:'Liberation Sans', sans-serif;font-size:16.8px;line-height:16.8px;font-weight:700;color:#0c0c5c;white-space:nowrap;letter-spacing:-0.127px;">Scegli cosa fare:</div><div style="position:absolute;left:271px;top:575px;width:1146px;height:1px;background:#a0a0a0;"></div><div style="position:absolute;left:301px;top:587px;width:1086px;height:84px;border:1px solid #dbe3eb;border-radius:2px;background:#fff;"></div><svg style="position:absolute;left:308px;top:622px" width="14" height="13" viewBox="0 0 14 13"><path d="M1,5 L7,5 L7,1 L13,6.5 L7,12 L7,8 L1,8 Z" fill="#28b428" stroke="#1a8a1a" stroke-width="0.6"/></svg><div style="position:absolute;left:333.4px;top:611.60px;font-family:'Liberation Sans', sans-serif;font-size:16.6px;line-height:16.6px;font-weight:700;color:#141414;white-space:nowrap;letter-spacing:0.337px;">F1 - Toglie l&#x27;ultimo prodotto inserito</div><div style="position:absolute;left:333.4px;top:635.89px;font-family:'Liberation Sans', sans-serif;font-size:12px;line-height:12px;font-weight:400;color:#1a1a1a;white-space:nowrap;letter-spacing:0.069px;">Toglie pezzi 1 di DS MILLEFOGLIE 500G</div><div style="position:absolute;left:301px;top:681px;width:1086px;height:84px;border:1px solid #dbe3eb;border-radius:2px;background:#fff;"></div><svg style="position:absolute;left:308px;top:716px" width="14" height="13" viewBox="0 0 14 13"><path d="M1,5 L7,5 L7,1 L13,6.5 L7,12 L7,8 L1,8 Z" fill="#28b428" stroke="#1a8a1a" stroke-width="0.6"/></svg><div style="position:absolute;left:333.4px;top:706.20px;font-family:'Liberation Sans', sans-serif;font-size:16.6px;line-height:16.6px;font-weight:700;color:#141414;white-space:nowrap;letter-spacing:0.421px;">F2 - Differenza a Contante</div><div style="position:absolute;left:333.4px;top:730.29px;font-family:'Liberation Sans', sans-serif;font-size:12px;line-height:12px;font-weight:400;color:#1a1a1a;white-space:nowrap;letter-spacing:0.377px;">Forza e la differenza sarà a carico del Paziente</div><div style="position:absolute;left:271px;top:775px;width:1146px;height:1px;background:#a0a0a0;"></div><div style="position:absolute;left:271px;top:776px;width:1146px;height:49px;background:#f0f0f0;"></div><div style="position:absolute;left:1302px;top:781px;width:111px;height:40px;background:#e1e1e1;border:1px solid #adadad;"></div><div style="position:absolute;left:1314.8px;top:795.41px;font-family:'Liberation Sans', sans-serif;font-size:13.4px;line-height:13.4px;font-weight:700;color:#000;white-space:nowrap;letter-spacing:-0.011px;">F12 - Annulla</div><div style="position:absolute;left:1418px;top:416px;width:6px;height:45px;background:#dcdcdc;border-right:1px solid #a0a0a0;border-bottom:1px solid #a0a0a0;"></div><svg style="position:absolute;left:1418px;top:417px" width="6" height="8"><path d="M0,0 L6,0 L6,7 Z" fill="#0a0a6a"/></svg>
</body></html>
